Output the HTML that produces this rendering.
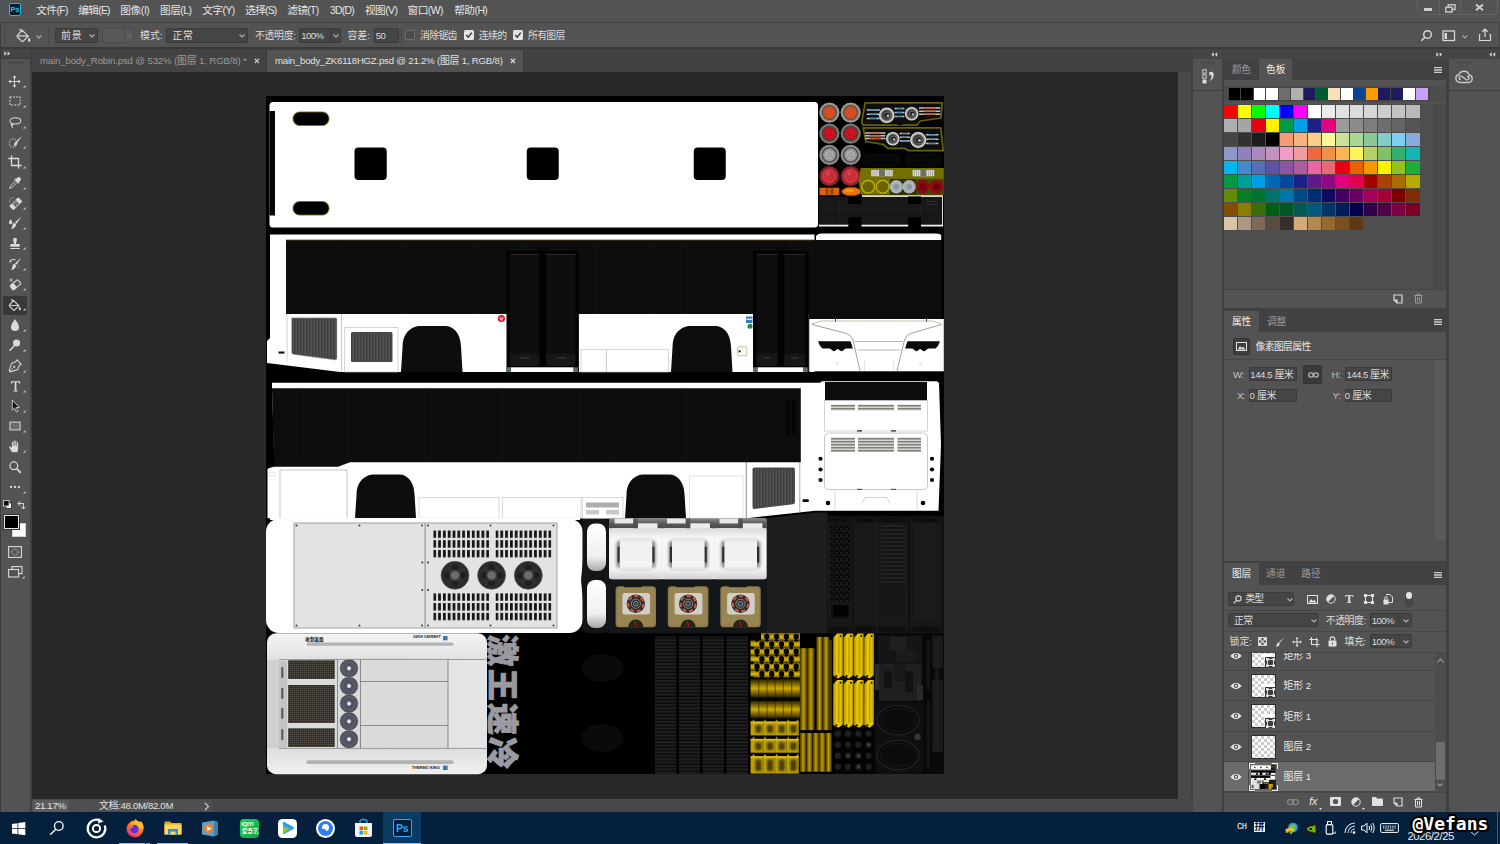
<!DOCTYPE html>
<html lang="zh-CN"><head><meta charset="utf-8"><title>Photoshop</title>
<style>
*{box-sizing:border-box;margin:0;padding:0}
html,body{width:1500px;height:844px;overflow:hidden;background:#535353}
body{position:relative;font-family:"Liberation Sans","Noto Sans CJK SC",sans-serif;font-size:9.9px;color:#dcdcdc;line-height:1}
.a{position:absolute}
.t{position:absolute;white-space:nowrap;line-height:12px;height:12px}
.dim{color:#9a9a9a}
.inp{position:absolute;background:#454545;border:1px solid #3a3a3a;border-radius:2px}
.ln{position:absolute;background:#383838}
.l{font-size:0.97em}
svg{position:absolute;overflow:visible}
</style></head>
<body>
<div class="a" style="left:0.0px;top:0.0px;width:1500.0px;height:22.0px;background:#535353;"></div>
<div class="a" style="left:9px;top:3px;width:12px;height:13px;background:#041c2c;border:1px solid #22b8f0;border-radius:2px"></div>
<div class="t" style="left:10.5px;top:4px;font-size:7.5px;line-height:11px;color:#2cc0f4;font-weight:bold;letter-spacing:-0.3px">Ps</div>
<div class="t " style="left:36.3px;top:3.8px;color:#e4e4e4;font-size:10.7px;letter-spacing:-0.625px;">文件<span class="l">(F)</span></div>
<div class="t " style="left:78.3px;top:3.8px;color:#e4e4e4;font-size:10.7px;letter-spacing:-0.741px;">编辑<span class="l">(E)</span></div>
<div class="t " style="left:120.3px;top:3.8px;color:#e4e4e4;font-size:10.7px;letter-spacing:-0.414px;">图像<span class="l">(I)</span></div>
<div class="t " style="left:160.0px;top:3.8px;color:#e4e4e4;font-size:10.7px;letter-spacing:-0.532px;">图层<span class="l">(L)</span></div>
<div class="t " style="left:202.2px;top:3.8px;color:#e4e4e4;font-size:10.7px;letter-spacing:-0.521px;">文字<span class="l">(Y)</span></div>
<div class="t " style="left:245.3px;top:3.8px;color:#e4e4e4;font-size:10.7px;letter-spacing:-0.821px;">选择<span class="l">(S)</span></div>
<div class="t " style="left:287.2px;top:3.8px;color:#e4e4e4;font-size:10.7px;letter-spacing:-0.645px;">滤镜<span class="l">(T)</span></div>
<div class="t " style="left:330.0px;top:3.8px;color:#e4e4e4;font-size:10.7px;letter-spacing:-0.745px;"><span class="l">3D(D)</span></div>
<div class="t " style="left:365.0px;top:3.8px;color:#e4e4e4;font-size:10.7px;letter-spacing:-0.581px;">视图<span class="l">(V)</span></div>
<div class="t " style="left:407.5px;top:3.8px;color:#e4e4e4;font-size:10.7px;letter-spacing:-0.556px;">窗口<span class="l">(W)</span></div>
<div class="t " style="left:454.2px;top:3.8px;color:#e4e4e4;font-size:10.7px;letter-spacing:-0.536px;">帮助<span class="l">(H)</span></div>
<div class="a" style="left:1417.200px;top:-3px;width:80.400px;height:17.800px;border:1px solid #636363;border-radius:0 0 3px 3px"></div>
<div class="a" style="left:1439.2px;top:0.0px;width:1.0px;height:14.8px;background:#636363;"></div>
<div class="a" style="left:1460.4px;top:0.0px;width:1.0px;height:14.8px;background:#636363;"></div>
<div class="a" style="left:1424.2px;top:8.4px;width:7.8px;height:2.4px;background:#cdcdcd;"></div>
<svg style="left:1444.500px;top:3.500px" width="11" height="9"><path d="M0.800 3.300h6.200v4.700h-6.200z M3.200 3.300v-2.500h6.800v4.700h-3" fill="none" stroke="#c4c4c4" stroke-width="1.500"/></svg>
<svg style="left:1474.500px;top:4px" width="9" height="7"><path d="M1 0.600l7 5.600M8 0.600l-7 5.600" fill="none" stroke="#d0d0d0" stroke-width="1.900"/></svg>
<div class="a" style="left:0.0px;top:21.6px;width:1500.0px;height:1.4px;background:#444444;"></div>
<div class="a" style="left:0.0px;top:23.5px;width:1500.0px;height:24.5px;background:#535353;"></div>
<div class="a" style="left:0.0px;top:47.0px;width:1500.0px;height:1.5px;background:#3a3a3a;"></div>
<div class="a" style="left:4px;top:28px;width:2px;height:15px;background:repeating-linear-gradient(180deg,#444 0 1px,transparent 1px 2px)"></div>
<svg style="left:16px;top:28px" width="16" height="16" viewBox="0 0 16 16"><path d="M6.2 2.2 L12.2 8.2 L7.2 13.2 Q6.4 14 5.6 13.2 L1.4 9 Q0.6 8.2 1.4 7.4 Z M2.2 7.8 L11.2 7.8" fill="none" stroke="#d8d8d8" stroke-width="1.2"/><path d="M3.5 1 L6.5 4" stroke="#d8d8d8" stroke-width="1.2"/><path d="M13.2 9.5 Q15.2 12.3 13.9 13.4 Q12.6 14.2 12 12.8 Q11.7 11.6 13.2 9.5Z" fill="#d8d8d8"/></svg>
<svg style="left:36.0px;top:34.8px" width="6" height="4"><path d="M0.5 0.5 L3.0 3.0 L5.5 0.5" fill="none" stroke="#b0b0b0" stroke-width="1.1"/></svg>
<div class="a" style="left:48.0px;top:28.0px;width:1.0px;height:16.0px;background:#474747;"></div>
<div class="inp" style="left:55.0px;top:28.0px;width:43.0px;height:15.0px;"></div>
<div class="t " style="left:61.0px;top:29.8px;letter-spacing:0.917px;">前景</div>
<svg style="left:89.0px;top:34.0px" width="6" height="4"><path d="M0.5 0.5 L3.0 3.0 L5.5 0.5" fill="none" stroke="#b0b0b0" stroke-width="1.1"/></svg>
<div class="a" style="left:102px;top:28px;width:32px;height:15px;border:1px solid #4b4b4b;border-radius:2px;background:#585858"></div>
<div class="a" style="left:124.0px;top:28.0px;width:1.0px;height:15.0px;background:#4b4b4b;"></div>
<svg style="left:126.5px;top:34.3px" width="5" height="4"><path d="M0.5 0.5 L2.5 2.5 L4.5 0.5" fill="none" stroke="#6a6a6a" stroke-width="1.1"/></svg>
<div class="t " style="left:140.0px;top:29.8px;letter-spacing:0.054px;">模式<span class="l">:</span></div>
<div class="inp" style="left:166.0px;top:28.0px;width:82.0px;height:15.0px;"></div>
<div class="t " style="left:172.5px;top:29.8px;letter-spacing:0.667px;">正常</div>
<svg style="left:239.0px;top:34.0px" width="6" height="4"><path d="M0.5 0.5 L3.0 3.0 L5.5 0.5" fill="none" stroke="#b0b0b0" stroke-width="1.1"/></svg>
<div class="t " style="left:255.0px;top:29.8px;letter-spacing:-0.317px;">不透明度<span class="l">:</span></div>
<div class="inp" style="left:299.0px;top:28.0px;width:42.0px;height:15.0px;"></div>
<div class="a" style="left:330.0px;top:29.0px;width:1.0px;height:13.0px;background:#3a3a3a;"></div>
<div class="t " style="left:301.3px;top:29.8px;letter-spacing:-0.562px;"><span class="l">100%</span></div>
<svg style="left:332.8px;top:34.0px" width="6" height="4"><path d="M0.5 0.5 L3.0 3.0 L5.5 0.5" fill="none" stroke="#b0b0b0" stroke-width="1.1"/></svg>
<div class="t " style="left:347.5px;top:29.8px;letter-spacing:-0.046px;">容差<span class="l">:</span></div>
<div class="inp" style="left:374.0px;top:28.0px;width:25.0px;height:15.0px;"></div>
<div class="t " style="left:375.8px;top:29.8px;letter-spacing:-0.586px;"><span class="l">50</span></div>
<div class="a" style="left:401.0px;top:28.0px;width:1.0px;height:16.0px;background:#464646;"></div>
<div class="a" style="left:405px;top:30px;width:10px;height:10px;border:1px solid #6e6e6e;border-radius:1px;background:#4a4a4a"></div>
<div class="t " style="left:420.0px;top:29.8px;letter-spacing:-0.679px;">消除锯齿</div>
<div class="a" style="left:464px;top:30px;width:10px;height:10px;border-radius:1.5px;background:#e4e4e4"></div>
<svg style="left:464px;top:30px" width="10" height="10"><path d="M2.2 5 L4.2 7.2 L7.8 2.6" fill="none" stroke="#3a3a3a" stroke-width="1.5"/></svg>
<div class="a" style="left:513px;top:30px;width:10px;height:10px;border-radius:1.5px;background:#e4e4e4"></div>
<svg style="left:513px;top:30px" width="10" height="10"><path d="M2.2 5 L4.2 7.2 L7.8 2.6" fill="none" stroke="#3a3a3a" stroke-width="1.5"/></svg>
<div class="t " style="left:478.8px;top:29.8px;letter-spacing:-0.614px;">连续的</div>
<div class="t " style="left:528.0px;top:29.8px;letter-spacing:-0.729px;">所有图层</div>
<svg style="left:1420px;top:29px" width="13" height="13"><circle cx="7.5" cy="5.5" r="3.8" fill="none" stroke="#d8d8d8" stroke-width="1.4"/><path d="M4.8 8.2 L1.3 11.7" stroke="#d8d8d8" stroke-width="1.6"/></svg>
<svg style="left:1442px;top:30px" width="14" height="12"><rect x="1" y="1" width="11.5" height="9.5" fill="none" stroke="#d8d8d8" stroke-width="1.3"/><rect x="2.5" y="3" width="2.5" height="6" fill="#d8d8d8"/></svg>
<svg style="left:1462.2px;top:34.9px" width="5" height="4"><path d="M0.5 0.5 L2.8 2.8 L5.1 0.5" fill="none" stroke="#b0b0b0" stroke-width="1.1"/></svg>
<svg style="left:1478px;top:28px" width="14" height="14"><path d="M2.5 6.5h-1v6h11v-6h-1" fill="none" stroke="#d8d8d8" stroke-width="1.2"/><path d="M7 9V1.5M4.3 3.8L7 1.2l2.7 2.6" fill="none" stroke="#d8d8d8" stroke-width="1.2"/></svg>
<div class="a" style="left:0.0px;top:48.5px;width:1193.0px;height:23.5px;background:#424242;"></div>
<div class="a" style="left:0.0px;top:48.5px;width:30.0px;height:9.1px;background:#454545;"></div>
<svg style="left:4px;top:51px" width="8" height="5"><path d="M0.3 0.3L2.8 2.5L0.3 4.7ZM3.6 0.3L6.1 2.5L3.6 4.7Z" fill="#d8d8d8"/></svg>
<div class="a" style="left:32.0px;top:49.5px;width:234.0px;height:22.5px;background:#434343;"></div>
<div class="a" style="left:266.0px;top:50.0px;width:1.0px;height:22.0px;background:#3a3a3a;"></div>
<div class="t dim" style="left:40.0px;top:54.5px;letter-spacing:-0.140px;"><span class="l">main_body_Robin.psd @ 532% (</span>图层 <span class="l">1, RGB/8) *</span></div>
<svg style="left:253.500px;top:57.800px" width="6" height="6"><path d="M0.800 0.800l4.200 4.200M5 0.800l-4.200 4.200" stroke="#c4c4c4" stroke-width="1.300"/></svg>
<div class="a" style="left:267.0px;top:49.5px;width:256.0px;height:22.5px;background:#535353;"></div>
<div class="a" style="left:523.0px;top:50.0px;width:1.0px;height:22.0px;background:#3c3c3c;"></div>
<div class="t " style="left:275.0px;top:54.5px;color:#e2e2e2;letter-spacing:-0.205px;"><span class="l">main_body_ZK6118HGZ.psd @ 21.2% (</span>图层 <span class="l">1, RGB/8)</span></div>
<svg style="left:509.800px;top:57.800px" width="6" height="6"><path d="M0.800 0.800l4.200 4.200M5 0.800l-4.200 4.200" stroke="#d4d4d4" stroke-width="1.300"/></svg>
<div class="a" style="left:32.0px;top:72.0px;width:1146.0px;height:727.0px;background:#282828;"></div>
<div class="a" style="left:1178.0px;top:72.0px;width:13.0px;height:727.0px;background:#4a4a4a;"></div>
<div class="a" style="left:1191.0px;top:48.5px;width:2.0px;height:763.5px;background:#404040;"></div>
<div class="a" style="left:0.0px;top:799.0px;width:1193.0px;height:13.0px;background:#474747;"></div>
<div class="a" style="left:32.0px;top:799.5px;width:180.0px;height:12.5px;background:#4f4f4f;"></div>
<div class="a" style="left:32.5px;top:800.0px;width:36.5px;height:11.7px;background:#5c5c5c;"></div>
<div class="t " style="left:35.0px;top:800.0px;color:#e8e8e8;letter-spacing:-0.324px;"><span class="l">21.17%</span></div>
<div class="t " style="left:99.0px;top:800.0px;color:#e0e0e0;letter-spacing:-0.310px;">文档<span class="l">:48.0M/82.0M</span></div>
<svg style="left:204px;top:802px" width="6" height="9"><path d="M1 1L4.500 4.500L1 8" fill="none" stroke="#d0d0d0" stroke-width="1.100"/></svg>
<div class="a" style="left:0.0px;top:58.5px;width:30.0px;height:753.5px;background:#535353;"></div>
<div class="a" style="left:0.0px;top:22.0px;width:1.0px;height:790.0px;background:#3c3c3c;"></div>
<div class="a" style="left:30.0px;top:48.5px;width:2.0px;height:763.5px;background:#404040;"></div>
<div class="a" style="left:0.0px;top:57.6px;width:30.0px;height:1.0px;background:#3a3a3a;"></div>
<div class="a" style="left:8px;top:61px;width:15px;height:3px;background:repeating-linear-gradient(90deg,#454545 0 1px,transparent 1px 2px)"></div>
<div class="a" style="left:3px;top:296px;width:24px;height:19px;background:#383838;border-radius:2px"></div>
<svg style="left:7.8px;top:74.8px" width="13" height="13" viewBox="0 0 18 18"><path d="M9 1.5V16.5M1.5 9H16.5" stroke="#dadada" stroke-width="1.3"/><path d="M9 0.5l2.6 3.2H6.4zM9 17.5l2.6-3.2H6.4zM0.5 9l3.2-2.6v5.2zM17.5 9l-3.2-2.6v5.2z" fill="#dadada"/></svg>
<svg style="left:22.6px;top:85.2px" width="2.6" height="2.6"><path d="M2.6 0V2.6H0Z" fill="#c8c8c8"/></svg>
<svg style="left:7.8px;top:94.0px" width="14" height="14" viewBox="0 0 18 18"><rect x="2.5" y="4" width="13" height="10" fill="none" stroke="#dadada" stroke-width="1.3" stroke-dasharray="2.4 1.6"/></svg>
<svg style="left:22.6px;top:104.8px" width="2.6" height="2.6"><path d="M2.6 0V2.6H0Z" fill="#c8c8c8"/></svg>
<svg style="left:7.8px;top:115.0px" width="14" height="14" viewBox="0 0 18 18"><path d="M9.5 3.5C14 3.5 16.5 5.5 16.5 7.5C16.5 10 13 11.5 9 11.5C5 11.5 2.5 10 2.5 7.8C2.5 5.5 5.5 3.5 9.5 3.5Z M5.5 11.2C4 11.5 3.8 13 5 13.3C6.3 13.5 6.3 12 5.4 11.5 M4.8 13.3C4.5 15 5.5 16 6.5 16.5" fill="none" stroke="#dadada" stroke-width="1.3"/></svg>
<svg style="left:22.6px;top:125.8px" width="2.6" height="2.6"><path d="M2.6 0V2.6H0Z" fill="#c8c8c8"/></svg>
<svg style="left:7.8px;top:134.9px" width="14" height="14" viewBox="0 0 18 18"><ellipse cx="6.500" cy="10.500" rx="4.800" ry="5.600" fill="none" stroke="#dadada" stroke-width="1.200" stroke-dasharray="1.800 1.400"/><path d="M17.500 1.500L12.600 9.200L10.800 7.700Z M10.300 8.200L12.100 9.700C12.100 12.200 10 14 7 14.400C8.200 13 8 11.500 8.600 10.100C9 9.100 9.600 8.400 10.300 8.200Z" fill="#dadada"/></svg>
<svg style="left:22.6px;top:145.8px" width="2.6" height="2.6"><path d="M2.6 0V2.6H0Z" fill="#c8c8c8"/></svg>
<svg style="left:7.8px;top:154.8px" width="14" height="14" viewBox="0 0 18 18"><path d="M4.5 0.5V13.5H17.5M0.5 4.5H13.5V17.5" fill="none" stroke="#dadada" stroke-width="1.7"/></svg>
<svg style="left:22.6px;top:165.6px" width="2.6" height="2.6"><path d="M2.6 0V2.6H0Z" fill="#c8c8c8"/></svg>
<svg style="left:7.8px;top:175.8px" width="14" height="14" viewBox="0 0 18 18"><path d="M15.8 2.2C14.6 1 13 1.2 12 2.2L10.2 4L9.4 3.2L8 4.6L13.4 10L14.8 8.6L14 7.8L15.8 6C16.8 5 17 3.4 15.8 2.2Z" fill="#dadada"/><path d="M9.5 6.5L3 13L2.2 15.8L5 15L11.5 8.5" fill="none" stroke="#dadada" stroke-width="1.2"/></svg>
<svg style="left:22.6px;top:186.6px" width="2.6" height="2.6"><path d="M2.6 0V2.6H0Z" fill="#c8c8c8"/></svg>
<svg style="left:7.8px;top:195.9px" width="14" height="14" viewBox="0 0 18 18"><path d="M2.2 8.5A5.6 5.6 0 0 1 8.6 2" fill="none" stroke="#dadada" stroke-width="1" stroke-dasharray="1.4 1.2"/><g transform="rotate(-45 10 10)"><rect x="1.8" y="6" width="16.4" height="8" rx="1.6" fill="#dadada"/><rect x="6.6" y="6.6" width="6.8" height="6.8" fill="#535353"/><rect x="7.2" y="7.2" width="5.6" height="5.6" fill="none" stroke="#dadada" stroke-width="0.7"/><circle cx="8.8" cy="8.8" r="0.7" fill="#dadada"/><circle cx="11.2" cy="8.8" r="0.7" fill="#dadada"/><circle cx="10" cy="11.2" r="0.7" fill="#dadada"/></g></svg>
<svg style="left:22.6px;top:206.8px" width="2.6" height="2.6"><path d="M2.6 0V2.6H0Z" fill="#c8c8c8"/></svg>
<svg style="left:7.8px;top:216.2px" width="14" height="14" viewBox="0 0 18 18"><path d="M17.2 0.8L11 10L8.8 8.2Z M8.2 8.8L10.4 10.6C10.6 13.6 8 16.2 4 16.8C5.6 14.8 5.2 12.8 6 11C6.5 9.8 7.3 9 8.2 8.8Z" fill="#dadada"/><path d="M3.4 4.200C3.4 4.200 1.200 7 1.200 8.400A2.200 2.200 0 0 0 5.600 8.400C5.600 7 3.400 4.200 3.400 4.200Z" fill="#dadada"/></svg>
<svg style="left:22.6px;top:227.0px" width="2.6" height="2.6"><path d="M2.6 0V2.6H0Z" fill="#c8c8c8"/></svg>
<svg style="left:7.8px;top:236.6px" width="14" height="14" viewBox="0 0 18 18"><path d="M6.5 3.5A2.5 2.5 0 1 1 11.5 3.5C11.5 5.5 10.3 6 10.3 9H15V12.5H3V9H7.7C7.7 6 6.5 5.5 6.5 3.5Z M3 14H15V15.5H3Z" fill="#dadada"/></svg>
<svg style="left:22.6px;top:247.4px" width="2.6" height="2.6"><path d="M2.6 0V2.6H0Z" fill="#c8c8c8"/></svg>
<svg style="left:7.8px;top:256.9px" width="14" height="14" viewBox="0 0 18 18"><path d="M17.2 0.8L11 10L8.8 8.2Z M8.2 8.8L10.4 10.6C10.6 13.6 8 16.2 4 16.8C5.6 14.8 5.2 12.8 6 11C6.5 9.8 7.3 9 8.2 8.800Z" fill="#dadada"/><path d="M2.500 5.500C4 3 7.500 2.500 9.500 4" fill="none" stroke="#dadada" stroke-width="1.300"/><path d="M1 6.800L3.800 4.200L4.200 7.200Z" fill="#dadada"/><circle cx="12.5" cy="13" r="0.6" fill="#dadada"/><circle cx="14" cy="11.200" r="0.600" fill="#dadada"/></svg>
<svg style="left:22.6px;top:267.8px" width="2.6" height="2.6"><path d="M2.6 0V2.6H0Z" fill="#c8c8c8"/></svg>
<svg style="left:7.8px;top:277.1px" width="14" height="14" viewBox="0 0 18 18"><g transform="rotate(-40 9 10)"><rect x="3" y="7" width="13" height="7" rx="1" fill="none" stroke="#dadada" stroke-width="1.3"/><rect x="3" y="7" width="6" height="7" fill="#dadada"/></g><path d="M2 2l4 4M6 2l-4 4" stroke="#dadada" stroke-width="1.1"/></svg>
<svg style="left:22.6px;top:288.0px" width="2.6" height="2.6"><path d="M2.6 0V2.6H0Z" fill="#c8c8c8"/></svg>
<svg style="left:7.8px;top:297.6px" width="14" height="14" viewBox="0 0 18 18"><path d="M7 3L14 10L8.6 15.4Q7.7 16.3 6.8 15.4L2.1 10.7Q1.2 9.8 2.1 8.9Z" fill="none" stroke="#dadada" stroke-width="1.4"/><path d="M3 9.6H12.8" stroke="#dadada" stroke-width="1.2"/><path d="M4 1.5L7.5 5" stroke="#dadada" stroke-width="1.3"/><path d="M15.2 11Q17.5 14.2 16 15.4Q14.5 16.2 13.9 14.7Q13.5 13.3 15.2 11Z" fill="#dadada"/></svg>
<svg style="left:22.6px;top:308.4px" width="2.6" height="2.6"><path d="M2.6 0V2.6H0Z" fill="#c8c8c8"/></svg>
<svg style="left:7.8px;top:317.8px" width="14" height="14" viewBox="0 0 18 18"><path d="M9 1.5C9 1.5 3.8 8 3.8 11.5A5.2 5.2 0 0 0 14.2 11.5C14.2 8 9 1.5 9 1.5Z" fill="#dadada"/></svg>
<svg style="left:22.6px;top:328.6px" width="2.6" height="2.6"><path d="M2.6 0V2.6H0Z" fill="#c8c8c8"/></svg>
<svg style="left:7.8px;top:338.1px" width="14" height="14" viewBox="0 0 18 18"><circle cx="11" cy="6.5" r="4.5" fill="#dadada"/><path d="M8 10L2 16.5" stroke="#dadada" stroke-width="1.8"/></svg>
<svg style="left:22.6px;top:348.9px" width="2.6" height="2.6"><path d="M2.6 0V2.6H0Z" fill="#c8c8c8"/></svg>
<svg style="left:7.8px;top:358.8px" width="14" height="14" viewBox="0 0 18 18"><path d="M11.5 1L17 6.5L14.5 8L12.5 13.5L3 16.5L1.5 15L4.5 5.5L10 3.5Z" fill="none" stroke="#dadada" stroke-width="1.3"/><circle cx="8" cy="10" r="1.4" fill="#dadada"/><path d="M2 16L7.2 10.8" stroke="#dadada" stroke-width="1"/></svg>
<svg style="left:22.6px;top:369.6px" width="2.6" height="2.6"><path d="M2.6 0V2.6H0Z" fill="#c8c8c8"/></svg>
<svg style="left:7.8px;top:378.9px" width="14" height="14" viewBox="0 0 18 18"><path d="M3.800 2.800H15.600V6.200H14.500C14.200 4.800 13.800 4.300 12.400 4.300H10.800V13.800C10.800 14.800 11.200 15 12.500 15.100V16.100H6.900V15.100C8.200 15 8.600 14.800 8.600 13.800V4.300H7C5.600 4.300 5.200 4.800 4.900 6.200H3.800Z" fill="#dadada"/></svg>
<svg style="left:22.6px;top:389.8px" width="2.6" height="2.6"><path d="M2.6 0V2.6H0Z" fill="#c8c8c8"/></svg>
<svg style="left:7.8px;top:399.1px" width="14" height="14" viewBox="0 0 18 18"><path d="M5.500 1.500V14.500L8.500 11.600L10.800 16.600L12.800 15.700L10.500 10.800H14.800Z" fill="#141414" stroke="#dadada" stroke-width="1.100" stroke-linejoin="round"/></svg>
<svg style="left:22.6px;top:410.0px" width="2.6" height="2.6"><path d="M2.6 0V2.6H0Z" fill="#c8c8c8"/></svg>
<svg style="left:7.8px;top:418.8px" width="14" height="14" viewBox="0 0 18 18"><rect x="2.5" y="4" width="13" height="10" fill="#6a6a6a" stroke="#dadada" stroke-width="1.3"/></svg>
<svg style="left:22.6px;top:429.6px" width="2.6" height="2.6"><path d="M2.6 0V2.6H0Z" fill="#c8c8c8"/></svg>
<svg style="left:7.8px;top:439.1px" width="14" height="14" viewBox="0 0 18 18"><path d="M5.200 17C3.800 14.600 1.600 11.800 1.600 10.400C1.600 9.300 3 9 3.700 10.100L5 12V4.500C5 3.300 6.700 3.300 6.700 4.500V8.500H7.100V2.800C7.100 1.600 8.800 1.600 8.800 2.800V8.500H9.200V3.200C9.200 2 10.900 2 10.900 3.200V8.800H11.300V5C11.300 3.800 13 3.800 13 5V12C13 14 12.600 15.600 12 17Z" fill="#dadada"/><path d="M6.900 4V9M9 3V9M11.100 4V9.300" stroke="#535353" stroke-width="0.500"/></svg>
<svg style="left:22.6px;top:449.9px" width="2.6" height="2.6"><path d="M2.6 0V2.6H0Z" fill="#c8c8c8"/></svg>
<svg style="left:7.8px;top:459.6px" width="14" height="14" viewBox="0 0 18 18"><circle cx="7.5" cy="7.5" r="5" fill="none" stroke="#dadada" stroke-width="1.6"/><path d="M11.2 11.2L16.5 16.5" stroke="#dadada" stroke-width="2.2"/></svg>
<svg style="left:7.8px;top:480.1px" width="14" height="14" viewBox="0 0 18 18"><circle cx="4" cy="9" r="1.5" fill="#dadada"/><circle cx="9" cy="9" r="1.5" fill="#dadada"/><circle cx="14" cy="9" r="1.5" fill="#dadada"/></svg>
<svg style="left:22.6px;top:490.9px" width="2.6" height="2.6"><path d="M2.6 0V2.6H0Z" fill="#c8c8c8"/></svg>
<svg style="left:3px;top:500px" width="9" height="9"><rect x="3" y="3" width="5.5" height="5.5" fill="#fff" stroke="#222" stroke-width="0.8"/><rect x="0.5" y="0.5" width="5.5" height="5.500" fill="#111" stroke="#ddd" stroke-width="0.8"/></svg>
<svg style="left:16px;top:500px" width="10" height="10"><path d="M2 3.500H7.500V9M2 3.500L4.200 1.300M2 3.500L4.200 5.700M7.500 9L5.300 6.800M7.500 9L9.700 6.800" fill="none" stroke="#dadada" stroke-width="1"/></svg>
<div class="a" style="left:11.5px;top:523px;width:14.5px;height:14px;background:#fff;border:1px solid #d0d0d0"></div>
<div class="a" style="left:4px;top:515px;width:14.5px;height:14px;background:#000;border:1px solid #e8e8e8;box-shadow:0 0 0 1px #333"></div>
<svg style="left:8px;top:545.5px" width="14" height="12"><rect x="0.6" y="0.6" width="12.800" height="10.800" fill="none" stroke="#dadada" stroke-width="1.1"/><circle cx="7" cy="6" r="3" fill="none" stroke="#dadada" stroke-width="1" stroke-dasharray="1.2 1"/></svg>
<svg style="left:8px;top:566px" width="15" height="12"><rect x="4" y="0.600" width="10" height="7" fill="#535353" stroke="#dadada" stroke-width="1.1"/><rect x="0.600" y="3.500" width="10" height="7.500" fill="#535353" stroke="#dadada" stroke-width="1.1"/></svg>
<svg style="left:22.2px;top:575.6px" width="2.6" height="2.6"><path d="M2.6 0V2.6H0Z" fill="#c8c8c8"/></svg>
<svg class="a" style="left:266px;top:96px" width="678" height="678" viewBox="266 96 678 678">
<defs>
<pattern id="vstripe" width="1.5" height="4" patternUnits="userSpaceOnUse"><rect width="1.5" height="4" fill="#5e5e5e"/><rect width="0.9" height="4" fill="#3a3a3a"/></pattern>
<pattern id="slots" x="433.3" y="530.3" width="4.82" height="9.8" patternUnits="userSpaceOnUse"><rect width="4.82" height="9.8" fill="#e4e4e4"/><rect x="0" y="0" width="2.8" height="7.7" rx="0.5" fill="#151515"/></pattern>
<pattern id="slots2" x="495.5" y="530.3" width="4.82" height="9.8" patternUnits="userSpaceOnUse"><rect width="4.82" height="9.8" fill="#e4e4e4"/><rect x="0" y="0" width="2.8" height="7.7" rx="0.5" fill="#151515"/></pattern>
<pattern id="slots3" x="433.3" y="593.2" width="4.82" height="9.8" patternUnits="userSpaceOnUse"><rect width="4.82" height="9.8" fill="#e4e4e4"/><rect x="0" y="0" width="2.8" height="7.7" rx="0.5" fill="#151515"/></pattern>
<pattern id="slots4" x="495.5" y="593.2" width="4.82" height="9.8" patternUnits="userSpaceOnUse"><rect width="4.82" height="9.8" fill="#e4e4e4"/><rect x="0" y="0" width="2.8" height="7.7" rx="0.5" fill="#151515"/></pattern>
<pattern id="hvent" width="4" height="1.5" patternUnits="userSpaceOnUse"><rect width="4" height="1.5" fill="#f4f4f4"/><rect width="4" height="0.8" fill="#6a6a62"/></pattern>
<pattern id="ribs" width="4" height="3.4" patternUnits="userSpaceOnUse"><rect width="4" height="3.4" fill="#202020"/><rect y="2.1" width="4" height="1.3" fill="#080808"/></pattern>
<pattern id="mesh" width="2" height="2" patternUnits="userSpaceOnUse"><rect width="2" height="2" fill="#3a3632"/><rect width="1" height="1" fill="#55504a"/><rect x="1" y="1" width="1" height="1" fill="#2a2724"/></pattern>
<linearGradient id="acg" x1="0" y1="0" x2="0" y2="1"><stop offset="0" stop-color="#f4f4f4"/><stop offset="0.25" stop-color="#dcdcdc"/><stop offset="0.75" stop-color="#d8d8d8"/><stop offset="1" stop-color="#f0f0f0"/></linearGradient>
<linearGradient id="capg" x1="0" y1="0" x2="0" y2="1"><stop offset="0" stop-color="#ffffff"/><stop offset="0.7" stop-color="#f0f0f0"/><stop offset="1" stop-color="#a8a8a8"/></linearGradient>
<linearGradient id="boxg" x1="0" y1="0" x2="0" y2="1"><stop offset="0" stop-color="#d8d8d8"/><stop offset="0.2" stop-color="#f8f8f8"/><stop offset="0.8" stop-color="#f4f4f4"/><stop offset="1" stop-color="#cfcfcf"/></linearGradient>
<linearGradient id="pipe" x1="0" y1="0" x2="1" y2="0"><stop offset="0" stop-color="#3a2e00"/><stop offset="0.5" stop-color="#c4a000"/><stop offset="1" stop-color="#3a2e00"/></linearGradient>
<pattern id="pipes" x="800" y="0" width="7.7" height="10" patternUnits="userSpaceOnUse"><rect width="7.7" height="10" fill="url(#pipe)"/></pattern>
<pattern id="ypipes" x="832.5" y="0" width="10.6" height="10" patternUnits="userSpaceOnUse"><rect width="10.6" height="10" fill="url(#pipe2)"/></pattern>
<linearGradient id="pipe2" x1="0" y1="0" x2="1" y2="0"><stop offset="0" stop-color="#a88c00"/><stop offset="0.35" stop-color="#ecca00"/><stop offset="0.8" stop-color="#e0be00"/><stop offset="1" stop-color="#8a7000"/></linearGradient>
<linearGradient id="yv2" x1="0" y1="0" x2="0" y2="1"><stop offset="0" stop-color="#6a5600"/><stop offset="0.45" stop-color="#d4b200"/><stop offset="0.6" stop-color="#d4b200"/><stop offset="1" stop-color="#5a4800"/></linearGradient>
<linearGradient id="yv" x1="0" y1="0" x2="0" y2="1"><stop offset="0" stop-color="#2a2200"/><stop offset="0.5" stop-color="#d0aa00"/><stop offset="1" stop-color="#2a2200"/></linearGradient>
<radialGradient id="lens"><stop offset="0" stop-color="#202020"/><stop offset="0.55" stop-color="#3a3a3a"/><stop offset="0.72" stop-color="#9a9a9a"/><stop offset="0.88" stop-color="#e0e0e0"/><stop offset="1" stop-color="#707070"/></radialGradient>
<linearGradient id="dkg" x1="0" y1="0" x2="0" y2="1"><stop offset="0" stop-color="#8a8a8a"/><stop offset="0.5" stop-color="#5a5a5a"/><stop offset="1" stop-color="#4a4a4a"/></linearGradient>
<linearGradient id="sqg" x1="0" y1="0" x2="0" y2="1"><stop offset="0" stop-color="#e2e2e2"/><stop offset="0.15" stop-color="#efefef"/><stop offset="0.85" stop-color="#f3f3f3"/><stop offset="1" stop-color="#dcdcdc"/></linearGradient>
<filter id="blur2" x="-20%" y="-20%" width="140%" height="140%"><feGaussianBlur stdDeviation="1.6"/></filter>
<filter id="blur1" x="-20%" y="-20%" width="140%" height="140%"><feGaussianBlur stdDeviation="0.8"/></filter>
<radialGradient id="fan"><stop offset="0" stop-color="#8a8a8a"/><stop offset="0.28" stop-color="#707070"/><stop offset="0.3" stop-color="#3a3a3a"/><stop offset="0.85" stop-color="#333"/><stop offset="1" stop-color="#1e1e1e"/></radialGradient>
<radialGradient id="fan2"><stop offset="0" stop-color="#b8bcc8"/><stop offset="0.25" stop-color="#8a90a0"/><stop offset="0.3" stop-color="#4a4e5c"/><stop offset="0.8" stop-color="#5a5e6c"/><stop offset="1" stop-color="#2e3038"/></radialGradient>
</defs>
<defs>
<pattern id="grit" width="5" height="6" patternUnits="userSpaceOnUse"><rect x="0.5" y="0.5" width="2" height="2.4" fill="none" stroke="#4a4a50" stroke-width="0.4"/><rect x="3" y="3.2" width="1.6" height="2" fill="none" stroke="#3c3c44" stroke-width="0.4"/></pattern>
<pattern id="grit2" width="3" height="4" patternUnits="userSpaceOnUse"><rect x="0.4" y="0.4" width="1.2" height="2.6" fill="#3c3c40"/><rect x="2" y="1.5" width="0.5" height="2" fill="#55555a"/></pattern>
</defs>
<rect x="266" y="96" width="678" height="678" fill="#000"/>
<rect x="269.50" y="102.00" width="548.50" height="125.50" fill="#ffffff" rx="3.5"/>
<rect x="269.50" y="111.00" width="5.50" height="104.50" fill="#050505" />
<rect x="293.00" y="112.00" width="36.00" height="13.50" fill="#000" rx="6.5" stroke="#7a6c10" stroke-width="0.9"/>
<rect x="293.00" y="201.50" width="36.00" height="13.50" fill="#000" rx="6.5" stroke="#7a6c10" stroke-width="0.9"/>
<rect x="354.50" y="147.50" width="32.25" height="32.50" fill="#000" rx="4"/>
<rect x="526.75" y="147.50" width="32.00" height="32.50" fill="#000" rx="4"/>
<rect x="693.75" y="147.50" width="32.00" height="32.50" fill="#000" rx="4"/>
<circle cx="829.40" cy="112.60" r="10.10" fill="#8c8c84" />
<circle cx="829.40" cy="112.60" r="9.20" fill="none" stroke="#d0d0c8" stroke-opacity="0.35" stroke-width="0.9"/>
<circle cx="829.40" cy="112.60" r="7.60" fill="#2a2a28" fill-opacity="0.55"/>
<circle cx="829.40" cy="112.60" r="6.30" fill="#cf4a20" />
<circle cx="829.40" cy="112.60" r="3.40" fill="none" stroke="#e8643a" stroke-opacity="0.55" stroke-width="1.6" stroke-dasharray="1.8 1.2"/>
<circle cx="829.40" cy="112.60" r="0.90" fill="#e8643a" fill-opacity="0.7"/>
<circle cx="850.70" cy="112.60" r="10.10" fill="#8c8c84" />
<circle cx="850.70" cy="112.60" r="9.20" fill="none" stroke="#d0d0c8" stroke-opacity="0.35" stroke-width="0.9"/>
<circle cx="850.70" cy="112.60" r="7.60" fill="#2a2a28" fill-opacity="0.55"/>
<circle cx="850.70" cy="112.60" r="6.30" fill="#cf4a20" />
<circle cx="850.70" cy="112.60" r="3.40" fill="none" stroke="#e8643a" stroke-opacity="0.55" stroke-width="1.6" stroke-dasharray="1.8 1.2"/>
<circle cx="850.70" cy="112.60" r="0.90" fill="#e8643a" fill-opacity="0.7"/>
<circle cx="829.40" cy="133.60" r="10.10" fill="#66665f" />
<circle cx="829.40" cy="133.60" r="9.20" fill="none" stroke="#d0d0c8" stroke-opacity="0.35" stroke-width="0.9"/>
<circle cx="829.40" cy="133.60" r="7.60" fill="#2a2a28" fill-opacity="0.55"/>
<circle cx="829.40" cy="133.60" r="6.30" fill="#c20f1e" />
<circle cx="829.40" cy="133.60" r="3.40" fill="none" stroke="#e03040" stroke-opacity="0.55" stroke-width="1.6" stroke-dasharray="1.8 1.2"/>
<circle cx="829.40" cy="133.60" r="0.90" fill="#e03040" fill-opacity="0.7"/>
<circle cx="850.70" cy="133.60" r="10.10" fill="#66665f" />
<circle cx="850.70" cy="133.60" r="9.20" fill="none" stroke="#d0d0c8" stroke-opacity="0.35" stroke-width="0.9"/>
<circle cx="850.70" cy="133.60" r="7.60" fill="#2a2a28" fill-opacity="0.55"/>
<circle cx="850.70" cy="133.60" r="6.30" fill="#c20f1e" />
<circle cx="850.70" cy="133.60" r="3.40" fill="none" stroke="#e03040" stroke-opacity="0.55" stroke-width="1.6" stroke-dasharray="1.8 1.2"/>
<circle cx="850.70" cy="133.60" r="0.90" fill="#e03040" fill-opacity="0.7"/>
<circle cx="829.40" cy="154.90" r="10.10" fill="#7c7c7a" />
<circle cx="829.40" cy="154.90" r="9.20" fill="none" stroke="#d0d0c8" stroke-opacity="0.35" stroke-width="0.9"/>
<circle cx="829.40" cy="154.90" r="7.60" fill="#2a2a28" fill-opacity="0.55"/>
<circle cx="829.40" cy="154.90" r="6.30" fill="#9a9a9a" />
<circle cx="829.40" cy="154.90" r="3.40" fill="none" stroke="#c8c8c8" stroke-opacity="0.55" stroke-width="1.6" stroke-dasharray="1.8 1.2"/>
<circle cx="829.40" cy="154.90" r="0.90" fill="#c8c8c8" fill-opacity="0.7"/>
<circle cx="850.70" cy="154.90" r="10.10" fill="#7c7c7a" />
<circle cx="850.70" cy="154.90" r="9.20" fill="none" stroke="#d0d0c8" stroke-opacity="0.35" stroke-width="0.9"/>
<circle cx="850.70" cy="154.90" r="7.60" fill="#2a2a28" fill-opacity="0.55"/>
<circle cx="850.70" cy="154.90" r="6.30" fill="#9a9a9a" />
<circle cx="850.70" cy="154.90" r="3.40" fill="none" stroke="#c8c8c8" stroke-opacity="0.55" stroke-width="1.6" stroke-dasharray="1.8 1.2"/>
<circle cx="850.70" cy="154.90" r="0.90" fill="#c8c8c8" fill-opacity="0.7"/>
<circle cx="829.40" cy="176.10" r="10.10" fill="#7e2029" />
<circle cx="829.40" cy="176.10" r="8.60" fill="#a5242e" />
<circle cx="829.40" cy="176.10" r="6.40" fill="#c82c36" stroke="#e8a0a0" stroke-opacity="0.5" stroke-width="0.6"/>
<circle cx="827.90" cy="173.60" r="2.20" fill="#f06068" fill-opacity="0.45"/>
<circle cx="850.70" cy="176.10" r="10.10" fill="#7e2029" />
<circle cx="850.70" cy="176.10" r="8.60" fill="#a5242e" />
<circle cx="850.70" cy="176.10" r="6.40" fill="#c82c36" stroke="#e8a0a0" stroke-opacity="0.5" stroke-width="0.6"/>
<circle cx="849.20" cy="173.60" r="2.20" fill="#f06068" fill-opacity="0.45"/>
<rect x="819.50" y="187.80" width="19.80" height="7.40" fill="#d8640a" rx="0.8"/>
<rect x="825.50" y="188.40" width="8.00" height="6.20" fill="#9a4206" />
<rect x="828.00" y="188.40" width="3.00" height="6.20" fill="#c05808" />
<ellipse cx="851.2" cy="191.5" rx="9.5" ry="4.3" fill="#e87808" stroke="#9a3c00" stroke-width="0.8"/>
<ellipse cx="849.5" cy="190.5" rx="4.5" ry="1.8" fill="#f8a030" fill-opacity="0.7"/>
<path d="M865.1 102.8L942.4 102.8L940.9 118L920.4 121L916.7 125.2L862.8 125.2L861.7 121.8Z" fill="#0e0e0e" stroke="#66620a" stroke-width="1.7" stroke-linejoin="round"/>
<path d="M863.2 127.8L940.9 127.8L943.2 150.6L908.3 150.6L904.5 148.3L887.8 148.3L883.3 144.5L865.9 141.5Z" fill="#0e0e0e" stroke="#66620a" stroke-width="1.7" stroke-linejoin="round"/>
<path d="M897 125.2L900 122.5L903 125.2Z" fill="#0a0a0a" />
<rect x="866.60" y="109.25" width="13.40" height="1.50" fill="#c4c4c4" rx="0.7"/>
<rect x="869.55" y="109.45" width="7.50" height="1.10" fill="#3a86b8" />
<rect x="866.60" y="113.45" width="13.40" height="1.50" fill="#c4c4c4" rx="0.7"/>
<rect x="869.55" y="113.65" width="7.50" height="1.10" fill="#3a86b8" />
<rect x="866.60" y="117.65" width="13.40" height="1.50" fill="#c4c4c4" rx="0.7"/>
<rect x="869.55" y="117.85" width="7.50" height="1.10" fill="#3a86b8" />
<rect x="894.50" y="107.85" width="10.00" height="1.50" fill="#c4c4c4" rx="0.7"/>
<rect x="896.70" y="108.05" width="5.60" height="1.10" fill="#3a86b8" />
<rect x="894.50" y="111.85" width="10.00" height="1.50" fill="#c4c4c4" rx="0.7"/>
<rect x="896.70" y="112.05" width="5.60" height="1.10" fill="#3a86b8" />
<rect x="894.50" y="115.65" width="10.00" height="1.50" fill="#c4c4c4" rx="0.7"/>
<rect x="896.70" y="115.85" width="5.60" height="1.10" fill="#3a86b8" />
<rect x="918.90" y="107.35" width="21.60" height="1.50" fill="#c4c4c4" rx="0.7"/>
<rect x="923.65" y="107.55" width="12.10" height="1.10" fill="#cc5212" />
<rect x="918.90" y="110.45" width="21.60" height="1.50" fill="#c4c4c4" rx="0.7"/>
<rect x="923.65" y="110.65" width="12.10" height="1.10" fill="#cc5212" />
<rect x="918.90" y="113.45" width="21.60" height="1.50" fill="#c4c4c4" rx="0.7"/>
<rect x="923.65" y="113.65" width="12.10" height="1.10" fill="#cc5212" />
<rect x="865.00" y="132.35" width="20.60" height="1.50" fill="#c4c4c4" rx="0.7"/>
<rect x="869.53" y="132.55" width="11.54" height="1.10" fill="#cc5212" />
<rect x="865.00" y="135.05" width="20.60" height="1.50" fill="#c4c4c4" rx="0.7"/>
<rect x="869.53" y="135.25" width="11.54" height="1.10" fill="#cc5212" />
<rect x="865.00" y="137.75" width="20.60" height="1.50" fill="#c4c4c4" rx="0.7"/>
<rect x="869.53" y="137.95" width="11.54" height="1.10" fill="#cc5212" />
<rect x="899.50" y="132.85" width="10.50" height="1.50" fill="#c4c4c4" rx="0.7"/>
<rect x="901.81" y="133.05" width="5.88" height="1.10" fill="#3a86b8" />
<rect x="899.50" y="136.55" width="10.50" height="1.50" fill="#c4c4c4" rx="0.7"/>
<rect x="901.81" y="136.75" width="5.88" height="1.10" fill="#3a86b8" />
<rect x="899.50" y="140.15" width="10.50" height="1.50" fill="#c4c4c4" rx="0.7"/>
<rect x="901.81" y="140.35" width="5.88" height="1.10" fill="#3a86b8" />
<rect x="925.70" y="133.95" width="12.90" height="1.50" fill="#c4c4c4" rx="0.7"/>
<rect x="928.54" y="134.15" width="7.22" height="1.10" fill="#3a86b8" />
<rect x="925.70" y="138.45" width="12.90" height="1.50" fill="#c4c4c4" rx="0.7"/>
<rect x="928.54" y="138.65" width="7.22" height="1.10" fill="#3a86b8" />
<rect x="925.70" y="142.65" width="12.90" height="1.50" fill="#c4c4c4" rx="0.7"/>
<rect x="928.54" y="142.85" width="7.22" height="1.10" fill="#3a86b8" />
<circle cx="886.70" cy="115.30" r="8.00" fill="url(#lens)" />
<circle cx="887.30" cy="115.60" r="3.36" fill="#1c1c1c" stroke="#8a8a8a" stroke-width="0.7"/>
<circle cx="887.90" cy="115.90" r="1.44" fill="#b8b8b0" />
<circle cx="911.70" cy="113.80" r="7.00" fill="url(#lens)" />
<circle cx="912.30" cy="114.10" r="2.94" fill="#1c1c1c" stroke="#8a8a8a" stroke-width="0.7"/>
<circle cx="912.90" cy="114.40" r="1.26" fill="#b8b8b0" />
<circle cx="892.80" cy="138.80" r="7.00" fill="url(#lens)" />
<circle cx="893.40" cy="139.10" r="2.94" fill="#1c1c1c" stroke="#8a8a8a" stroke-width="0.7"/>
<circle cx="894.00" cy="139.40" r="1.26" fill="#b8b8b0" />
<circle cx="918.20" cy="140.00" r="8.30" fill="url(#lens)" />
<circle cx="918.80" cy="140.30" r="3.49" fill="#1c1c1c" stroke="#8a8a8a" stroke-width="0.7"/>
<circle cx="919.40" cy="140.60" r="1.49" fill="#b8b8b0" />
<rect x="864.00" y="153.00" width="36.00" height="14.00" fill="#080808" rx="5"/>
<rect x="905.00" y="153.00" width="37.00" height="14.00" fill="#080808" rx="5"/>
<path d="M860.7 167.9L943.8 167.9L943.8 194.8L860.7 194.8L858.5 181Z" fill="#747000" />
<rect x="889.70" y="178.90" width="26.30" height="15.90" fill="#343200" />
<rect x="916.00" y="178.90" width="27.80" height="15.90" fill="#4a4500" />
<rect x="871.20" y="169.90" width="21.60" height="6.40" fill="#d4d4d4" />
<rect x="879.00" y="169.90" width="6.00" height="6.40" fill="#6e6e6e" />
<rect x="872.70" y="170.40" width="0.70" height="5.40" fill="#a0a0a0" />
<rect x="874.70" y="170.40" width="0.70" height="5.40" fill="#a0a0a0" />
<rect x="876.70" y="170.40" width="0.70" height="5.40" fill="#a0a0a0" />
<rect x="886.70" y="170.40" width="0.70" height="5.40" fill="#a0a0a0" />
<rect x="888.70" y="170.40" width="0.70" height="5.40" fill="#a0a0a0" />
<rect x="890.70" y="170.40" width="0.70" height="5.40" fill="#a0a0a0" />
<rect x="912.60" y="169.90" width="21.60" height="6.40" fill="#d4d4d4" />
<rect x="920.40" y="169.90" width="6.00" height="6.40" fill="#6e6e6e" />
<rect x="914.10" y="170.40" width="0.70" height="5.40" fill="#a0a0a0" />
<rect x="916.10" y="170.40" width="0.70" height="5.40" fill="#a0a0a0" />
<rect x="918.10" y="170.40" width="0.70" height="5.40" fill="#a0a0a0" />
<rect x="928.10" y="170.40" width="0.70" height="5.40" fill="#a0a0a0" />
<rect x="930.10" y="170.40" width="0.70" height="5.40" fill="#a0a0a0" />
<rect x="932.10" y="170.40" width="0.70" height="5.40" fill="#a0a0a0" />
<circle cx="868.10" cy="186.80" r="6.40" fill="#6a6200" stroke="#c4b400" stroke-width="1.3"/>
<circle cx="882.70" cy="186.80" r="6.40" fill="#6a6200" stroke="#c4b400" stroke-width="1.3"/>
<circle cx="896.30" cy="186.80" r="6.70" fill="#a9b1b9" />
<circle cx="896.30" cy="186.80" r="3.60" fill="#8f979f" stroke="#c0c8d0" stroke-width="0.6"/>
<circle cx="909.10" cy="186.80" r="6.70" fill="#a9b1b9" />
<circle cx="909.10" cy="186.80" r="3.60" fill="#8f979f" stroke="#c0c8d0" stroke-width="0.6"/>
<circle cx="922.70" cy="186.80" r="6.70" fill="#8c0a12" />
<circle cx="922.70" cy="186.80" r="3.20" fill="#6c0008" />
<circle cx="936.40" cy="186.80" r="6.70" fill="#8c0a12" />
<circle cx="936.40" cy="186.80" r="3.20" fill="#6c0008" />
<rect x="862.00" y="195.20" width="81.00" height="1.70" fill="#f0f0e8" />
<rect x="818.80" y="197.00" width="123.30" height="27.90" fill="#181818" />
<rect x="818.80" y="224.70" width="124.10" height="1.80" fill="#eeeeea" />
<rect x="942.10" y="197.00" width="0.90" height="29.50" fill="#eeeeea" />
<rect x="839.00" y="200.00" width="0.60" height="23.00" fill="#242422" />
<rect x="866.00" y="200.00" width="0.60" height="23.00" fill="#242422" />
<rect x="893.00" y="200.00" width="0.60" height="23.00" fill="#242422" />
<rect x="920.00" y="200.00" width="0.60" height="23.00" fill="#242422" />
<rect x="822.00" y="209.50" width="116.00" height="0.70" fill="#242422" />
<rect x="926.00" y="201.00" width="12.00" height="1.00" fill="#2c2c2a" />
<rect x="926.00" y="204.00" width="12.00" height="1.00" fill="#2c2c2a" />
<rect x="848.30" y="196.40" width="13.20" height="7.60" fill="#000" />
<rect x="848.30" y="217.20" width="13.20" height="10.80" fill="#000" />
<rect x="908.20" y="196.40" width="12.80" height="7.60" fill="#000" />
<rect x="908.20" y="217.20" width="12.80" height="10.80" fill="#000" />
<path d="M270 234.5L814.5 234.5L814.5 372L340 372L267 363L267 341L270 338Z" fill="#ffffff" />
<path d="M816 240L816 236Q818 233.4 822 233.6L936 233.6Q940.5 233.6 941.5 236L941.5 240Z" fill="#ffffff" />
<rect x="286.00" y="240.00" width="657.80" height="74.00" fill="#0d0d0d" />
<rect x="808.50" y="314.00" width="135.30" height="5.00" fill="#0d0d0d" />
<rect x="808.50" y="319.00" width="1.00" height="53.00" fill="#000" />
<rect x="286.00" y="239.60" width="528.00" height="0.80" fill="#5a5018" />
<rect x="809.50" y="319.00" width="134.30" height="52.30" fill="#ffffff" />
<rect x="941.50" y="236.00" width="2.30" height="83.00" fill="#000" />
<rect x="340.50" y="240.00" width="0.60" height="74.00" fill="#171717" />
<rect x="401.00" y="240.00" width="0.60" height="74.00" fill="#171717" />
<rect x="473.00" y="240.00" width="0.60" height="74.00" fill="#171717" />
<rect x="520.00" y="240.00" width="0.60" height="74.00" fill="#171717" />
<rect x="595.00" y="240.00" width="0.60" height="74.00" fill="#171717" />
<rect x="650.00" y="240.00" width="0.60" height="74.00" fill="#171717" />
<rect x="680.00" y="240.00" width="0.60" height="74.00" fill="#171717" />
<rect x="506.50" y="250.75" width="72.40" height="121.25" fill="#030303" />
<rect x="510.10" y="254.00" width="29.15" height="111.70" fill="#0f0e0e" />
<rect x="510.10" y="353.70" width="29.15" height="12.00" fill="#181616" />
<rect x="519.72" y="357.50" width="9.91" height="0.90" fill="#4a4038" />
<rect x="510.10" y="254.00" width="29.15" height="1.00" fill="#2a2826" />
<rect x="546.15" y="254.00" width="29.15" height="111.70" fill="#0f0e0e" />
<rect x="546.15" y="353.70" width="29.15" height="12.00" fill="#181616" />
<rect x="555.77" y="357.50" width="9.91" height="0.90" fill="#4a4038" />
<rect x="546.15" y="254.00" width="29.15" height="1.00" fill="#2a2826" />
<rect x="510.90" y="367.30" width="62.70" height="4.70" fill="#ffffff" />
<rect x="506.50" y="367.30" width="4.40" height="4.70" fill="#5e6e60" />
<rect x="573.60" y="367.30" width="4.30" height="4.70" fill="#5e6e60" />
<rect x="536.70" y="247.20" width="12.00" height="2.00" fill="#050505" rx="1"/>
<rect x="753.00" y="250.75" width="55.75" height="121.25" fill="#030303" />
<rect x="756.60" y="254.00" width="20.82" height="111.70" fill="#0f0e0e" />
<rect x="756.60" y="353.70" width="20.82" height="12.00" fill="#181616" />
<rect x="763.47" y="357.50" width="7.08" height="0.90" fill="#4a4038" />
<rect x="756.60" y="254.00" width="20.82" height="1.00" fill="#2a2826" />
<rect x="784.33" y="254.00" width="20.82" height="111.70" fill="#0f0e0e" />
<rect x="784.33" y="353.70" width="20.82" height="12.00" fill="#181616" />
<rect x="791.20" y="357.50" width="7.08" height="0.90" fill="#4a4038" />
<rect x="784.33" y="254.00" width="20.82" height="1.00" fill="#2a2826" />
<rect x="757.40" y="367.30" width="46.05" height="4.70" fill="#ffffff" />
<rect x="753.00" y="367.30" width="4.40" height="4.70" fill="#5e6e60" />
<rect x="803.45" y="367.30" width="4.30" height="4.70" fill="#5e6e60" />
<rect x="774.88" y="247.20" width="12.00" height="2.00" fill="#050505" rx="1"/>
<path d="M291.5 318.5Q291.5 317.8 293 317.8L335.5 317.8Q337 317.8 337 319.5L337 358Q337 360.3 335 360L293.5 354.5Q291.5 354 291.5 352Z" fill="url(#vstripe)" stroke="#c0c0c0" stroke-width="0.6"/>
<rect x="286.80" y="314.00" width="0.60" height="47.00" fill="#b8b8b8" />
<rect x="341.00" y="314.00" width="0.70" height="58.00" fill="#b0b0b0" />
<rect x="344.50" y="327.50" width="53.50" height="44.50" fill="#ffffff" stroke="#c4c4c4" stroke-width="0.7"/>
<rect x="351.00" y="332.00" width="41.50" height="30.00" fill="url(#vstripe)" rx="1.5"/>
<rect x="278.50" y="351.50" width="6.00" height="2.10" fill="#111" />
<path d="M401.0 372.0 L402.6 346.2 C402.9 332.0 412.5 326.0 420.1 326.0 L445.6 326.0 C452.5 326.0 460.3 332.0 461.0 346.2 L462.5 372.0 Z" fill="#0d0d0d" />
<path d="M671.0 372.0 L672.6 346.2 C672.9 332.0 682.5 326.0 690.1 326.0 L715.6 326.0 C722.5 326.0 730.3 332.0 731.0 346.2 L732.5 372.0 Z" fill="#0d0d0d" />
<circle cx="501.40" cy="318.50" r="3.60" fill="#cf1f2c" />
<path d="M499.2 317.6L503.6 317.6L501.4 321Z" fill="#fff" />
<path d="M500.3 317.8L502.5 317.8L501.4 319.4Z" fill="#cf1f2c" />
<rect x="746.00" y="316.50" width="6.50" height="6.50" fill="#3a78c0" />
<rect x="746.50" y="318.50" width="6.00" height="1.50" fill="#cfe0f0" />
<circle cx="750.00" cy="326.30" r="2.50" fill="#2a8a3a" />
<rect x="737.50" y="346.75" width="9.25" height="9.00" fill="#fdfdf4" stroke="#9a9a80" stroke-width="0.6" rx="1"/>
<rect x="738.60" y="350.30" width="2.00" height="2.00" fill="#222" />
<rect x="581.00" y="349.30" width="87.50" height="22.70" fill="#ffffff" stroke="#c2c6c2" stroke-width="0.7"/>
<rect x="606.00" y="349.30" width="0.70" height="22.70" fill="#b8b8b8" />
<path d="M812 324L821 321L932 321L941.5 324" fill="none" stroke="#807a58" stroke-width="0.5"/>
<path d="M812 324.5L845 333Q852 335 853.5 342L860 371" fill="none" stroke="#55533f" stroke-width="0.55"/>
<path d="M941.5 324.5L912 333Q905.5 335 904 342L897 371" fill="none" stroke="#55533f" stroke-width="0.55"/>
<path d="M855 341.500L903 341.500M857.500 350L900.500 350" fill="none" stroke="#8c8c84" stroke-width="0.600"/>
<path d="M864.500 361V371M893.500 361V371" fill="none" stroke="#c8c8c0" stroke-width="0.500"/>
<path d="M818 341.2L850.5 341.2Q852 345 852.8 348.6L846.5 348.6Q845 348.6 844 349.8Q841.5 352.6 839 349.8Q837.8 348.4 836.6 349.8Q834 352.6 831.5 349.8Q830.5 348.6 829 348.6L822.5 348.6Q819.5 346 818 341.2Z" fill="#0a0a0a" />
<path d="M940 341.2L907.5 341.2Q906 345 905.2 348.6L911.5 348.6Q913 348.6 914 349.8Q916.5 352.6 919 349.8Q920.2 348.400 921.400 349.800Q924 352.600 926.500 349.800Q927.500 348.600 929 348.600L935.500 348.600Q938.500 346 940 341.200Z" fill="#0a0a0a" />
<circle cx="837.00" cy="363.50" r="1.40" fill="#e2e8e2" />
<circle cx="920.50" cy="363.50" r="1.40" fill="#e2e8e2" />
<rect x="835.00" y="319.00" width="1.00" height="2.50" fill="#333" />
<rect x="926.00" y="319.00" width="1.00" height="2.50" fill="#333" />
<path d="M272 382.8L820 382.8L822 381.2L937 381.2L939 383L941 445L938.5 510.8L815 510.8L747 518.2L267.5 518.2L267.5 469L272 466Z" fill="#ffffff" />
<path d="M272 388.2L800.8 388.2L800.8 462.3L350 462.3L338 466.7L274 466.7Z" fill="#0d0d0d" />
<path d="M266 388L272 388L274.5 466.5L266 469Z" fill="#000" />
<rect x="296.50" y="388.20" width="0.60" height="73.80" fill="#181818" />
<rect x="347.50" y="388.20" width="0.60" height="73.80" fill="#181818" />
<rect x="424.50" y="388.20" width="0.60" height="73.80" fill="#181818" />
<rect x="502.00" y="388.20" width="0.60" height="73.80" fill="#181818" />
<rect x="580.00" y="388.20" width="0.60" height="73.80" fill="#181818" />
<rect x="613.50" y="388.20" width="0.60" height="73.80" fill="#181818" />
<rect x="686.00" y="388.20" width="0.60" height="73.80" fill="#181818" />
<rect x="746.00" y="388.20" width="0.60" height="73.80" fill="#181818" />
<rect x="786.00" y="400.00" width="4.00" height="34.00" fill="#050505" />
<rect x="792.00" y="400.00" width="4.00" height="34.00" fill="#050505" />
<rect x="280.00" y="470.00" width="67.00" height="48.30" fill="#ffffff" stroke="#a8aca8" stroke-width="0.7"/>
<rect x="269.00" y="472.00" width="6.00" height="4.50" fill="#fafafa" stroke="#d0d0d0" stroke-width="0.5"/>
<path d="M355.0 518.2 L356.6 493.7 C356.9 480.2 366.5 474.5 373.9 474.5 L399.2 474.5 C406.0 474.5 413.8 480.2 414.5 493.7 L416.0 518.2 Z" fill="#0d0d0d" />
<path d="M625.0 518.2 L626.6 493.7 C626.9 480.2 636.5 474.5 643.9 474.5 L669.2 474.5 C676.0 474.5 683.8 480.2 684.5 493.7 L686.0 518.2 Z" fill="#0d0d0d" />
<rect x="419.00" y="497.50" width="80.00" height="20.70" fill="#ffffff" stroke="#c8c8c8" stroke-width="0.7"/>
<rect x="502.50" y="497.50" width="78.50" height="20.70" fill="#ffffff" stroke="#c8c8c8" stroke-width="0.7"/>
<rect x="582.50" y="497.50" width="40.50" height="20.70" fill="#ffffff" stroke="#c8c8c8" stroke-width="0.7"/>
<rect x="586.00" y="502.50" width="33.00" height="5.00" fill="url(#vstripe)" opacity="0.45"/>
<rect x="586.00" y="510.00" width="13.00" height="4.50" fill="url(#vstripe)" opacity="0.3"/>
<rect x="606.00" y="510.00" width="13.00" height="4.50" fill="url(#vstripe)" opacity="0.3"/>
<rect x="689.50" y="476.00" width="53.50" height="42.20" fill="#ffffff" stroke="#d4d4d4" stroke-width="0.7"/>
<rect x="745.80" y="462.00" width="0.80" height="56.00" fill="#707070" />
<rect x="799.50" y="462.00" width="0.70" height="50.50" fill="#8a8a8a" />
<path d="M752.5 469.5Q752.500 467.5 754.5 467.5L793 467.5Q795 467.5 795 469.5L795 502Q795 504 793 504.3L754.5 509Q752.5 509.300 752.5 507Z" fill="url(#vstripe)" />
<rect x="802.50" y="499.30" width="6.30" height="2.60" fill="#0a0a0a" rx="0.6"/>
<rect x="825.00" y="382.00" width="102.00" height="18.50" fill="#0d0d0d" />
<rect x="824.50" y="400.50" width="103.00" height="30.50" fill="#ffffff" stroke="#b8b8b8" stroke-width="0.6"/>
<rect x="824.50" y="433.00" width="103.00" height="56.50" fill="#ffffff" stroke="#b0b0b0" stroke-width="0.7" rx="4"/>
<rect x="831.00" y="404.50" width="24.00" height="6.00" fill="url(#hvent)" />
<rect x="831.00" y="437.50" width="24.00" height="14.50" fill="url(#hvent)" />
<rect x="858.00" y="404.50" width="36.00" height="6.00" fill="url(#hvent)" />
<rect x="858.00" y="437.50" width="36.00" height="14.50" fill="url(#hvent)" />
<rect x="897.50" y="404.50" width="23.50" height="6.00" fill="url(#hvent)" />
<rect x="897.50" y="437.50" width="23.50" height="14.50" fill="url(#hvent)" />
<circle cx="820.50" cy="458.75" r="2.10" fill="#000" />
<circle cx="932.00" cy="458.75" r="2.10" fill="#000" />
<circle cx="820.50" cy="469.50" r="2.10" fill="#000" />
<circle cx="932.00" cy="469.50" r="2.10" fill="#000" />
<circle cx="820.50" cy="480.00" r="2.10" fill="#000" />
<circle cx="932.00" cy="480.00" r="2.10" fill="#000" />
<circle cx="828.00" cy="503.00" r="2.30" fill="#000" />
<circle cx="923.00" cy="503.00" r="2.30" fill="#000" />
<path d="M835 489.500L835 510.800M917 489.500L917 510.800" fill="none" stroke="#b8b8b8" stroke-width="0.600"/>
<path d="M862 503.500L865 497.500L887 497.500L890 503.500" fill="none" stroke="#a8b8a8" stroke-width="0.600"/>
<rect x="857.00" y="430.30" width="5.00" height="1.20" fill="#222" />
<rect x="857.00" y="488.80" width="5.00" height="1.20" fill="#555" />
<rect x="891.00" y="430.30" width="5.00" height="1.20" fill="#222" />
<rect x="891.00" y="488.80" width="5.00" height="1.20" fill="#555" />
<rect x="266.00" y="518.80" width="316.50" height="114.20" fill="#ffffff" rx="13"/>
<rect x="270.00" y="518.00" width="310.00" height="2.00" fill="#ffffff" />
<rect x="294.00" y="523.00" width="263.00" height="105.00" fill="#e3e3e3" stroke="#8e8e8e" stroke-width="0.8"/>
<rect x="424.60" y="523.00" width="1.00" height="105.00" fill="#8a8a8a" />
<circle cx="296.50" cy="525.50" r="1.00" fill="#3a3a3a" />
<circle cx="359.50" cy="525.50" r="1.00" fill="#3a3a3a" />
<circle cx="422.00" cy="525.50" r="1.00" fill="#3a3a3a" />
<circle cx="428.00" cy="525.50" r="1.00" fill="#3a3a3a" />
<circle cx="490.50" cy="525.50" r="1.00" fill="#3a3a3a" />
<circle cx="553.50" cy="525.50" r="1.00" fill="#3a3a3a" />
<circle cx="296.50" cy="625.50" r="1.00" fill="#3a3a3a" />
<circle cx="359.50" cy="625.50" r="1.00" fill="#3a3a3a" />
<circle cx="422.00" cy="625.50" r="1.00" fill="#3a3a3a" />
<circle cx="428.00" cy="625.50" r="1.00" fill="#3a3a3a" />
<circle cx="490.50" cy="625.50" r="1.00" fill="#3a3a3a" />
<circle cx="553.50" cy="625.50" r="1.00" fill="#3a3a3a" />
<circle cx="422.30" cy="562.50" r="1.00" fill="#3a3a3a" />
<circle cx="428.00" cy="562.50" r="1.00" fill="#3a3a3a" />
<circle cx="422.30" cy="590.00" r="1.00" fill="#3a3a3a" />
<circle cx="428.00" cy="590.00" r="1.00" fill="#3a3a3a" />
<rect x="433.30" y="530.30" width="55.84" height="27.40" fill="url(#slots)" />
<rect x="495.50" y="530.30" width="55.84" height="27.40" fill="url(#slots2)" />
<rect x="433.30" y="593.20" width="55.84" height="27.40" fill="url(#slots3)" />
<rect x="495.50" y="593.20" width="55.84" height="27.40" fill="url(#slots4)" />
<circle cx="455.00" cy="575.30" r="14.00" fill="#2f2f2f" stroke="#555" stroke-width="0.6"/>
<circle cx="455.00" cy="575.30" r="12.20" fill="none" stroke="#262626" stroke-width="1"/>
<ellipse cx="455.0" cy="567.3" rx="3.6" ry="2.8" fill="#1f1f1f"/>
<ellipse cx="463.0" cy="575.3" rx="2.8" ry="3.6" fill="#1f1f1f"/>
<ellipse cx="455.0" cy="583.3" rx="3.6" ry="2.8" fill="#1f1f1f"/>
<ellipse cx="447.0" cy="575.3" rx="2.8" ry="3.6" fill="#1f1f1f"/>
<circle cx="455.00" cy="575.30" r="5.60" fill="#3c3c3c" />
<circle cx="455.00" cy="575.30" r="4.10" fill="#6c6c6c" />
<circle cx="491.60" cy="575.30" r="14.00" fill="#2f2f2f" stroke="#555" stroke-width="0.6"/>
<circle cx="491.60" cy="575.30" r="12.20" fill="none" stroke="#262626" stroke-width="1"/>
<ellipse cx="491.6" cy="567.3" rx="3.6" ry="2.8" fill="#1f1f1f"/>
<ellipse cx="499.6" cy="575.3" rx="2.8" ry="3.6" fill="#1f1f1f"/>
<ellipse cx="491.6" cy="583.3" rx="3.6" ry="2.8" fill="#1f1f1f"/>
<ellipse cx="483.6" cy="575.3" rx="2.8" ry="3.6" fill="#1f1f1f"/>
<circle cx="491.60" cy="575.30" r="5.60" fill="#3c3c3c" />
<circle cx="491.60" cy="575.30" r="4.10" fill="#6c6c6c" />
<circle cx="528.30" cy="575.30" r="14.00" fill="#2f2f2f" stroke="#555" stroke-width="0.6"/>
<circle cx="528.30" cy="575.30" r="12.20" fill="none" stroke="#262626" stroke-width="1"/>
<ellipse cx="528.3" cy="567.3" rx="3.6" ry="2.8" fill="#1f1f1f"/>
<ellipse cx="536.3" cy="575.3" rx="2.8" ry="3.6" fill="#1f1f1f"/>
<ellipse cx="528.3" cy="583.3" rx="3.6" ry="2.8" fill="#1f1f1f"/>
<ellipse cx="520.3" cy="575.3" rx="2.8" ry="3.6" fill="#1f1f1f"/>
<circle cx="528.30" cy="575.30" r="5.60" fill="#3c3c3c" />
<circle cx="528.30" cy="575.30" r="4.10" fill="#6c6c6c" />
<path d="M581.8 519L604 519Q609 519 609 524L609 628Q609 633.3 604 633.3L588 633.3Q583 633.3 583 628L583 600L581 580L583 560L583 524Z" fill="#151515" />
<rect x="587.00" y="523.40" width="19.00" height="47.60" fill="url(#capg)" rx="8"/>
<rect x="587.00" y="580.00" width="19.00" height="48.00" fill="url(#capg)" rx="8"/>
<rect x="609.00" y="518.40" width="157.80" height="61.10" fill="#e9e9e9" rx="3"/>
<rect x="609.00" y="518.40" width="157.80" height="9.90" fill="url(#dkg)" />
<rect x="609.50" y="528.00" width="51.90" height="51.50" fill="url(#boxg)" rx="4"/>
<rect x="614.60" y="518.60" width="18.70" height="4.90" fill="#e6e6e6" />
<rect x="637.80" y="523.30" width="19.70" height="5.10" fill="#ebebeb" />
<rect x="633.30" y="518.40" width="4.50" height="9.90" fill="#4c4c4c" opacity="0.7"/>
<rect x="661.95" y="528.00" width="51.90" height="51.50" fill="url(#boxg)" rx="4"/>
<rect x="667.05" y="518.60" width="18.70" height="4.90" fill="#e6e6e6" />
<rect x="690.25" y="523.30" width="19.70" height="5.10" fill="#ebebeb" />
<rect x="685.75" y="518.40" width="4.50" height="9.90" fill="#4c4c4c" opacity="0.7"/>
<rect x="714.40" y="528.00" width="51.90" height="51.50" fill="url(#boxg)" rx="4"/>
<rect x="719.50" y="518.60" width="18.70" height="4.90" fill="#e6e6e6" />
<rect x="742.70" y="523.30" width="19.70" height="5.10" fill="#ebebeb" />
<rect x="738.20" y="518.40" width="4.50" height="9.90" fill="#4c4c4c" opacity="0.7"/>
<rect x="616.50" y="540.50" width="39.00" height="27.50" fill="#5c5c5c" rx="4" filter="url(#blur2)" opacity="0.75"/>
<rect x="617.50" y="546.50" width="3.20" height="16.00" fill="#2c2c2c" rx="1.2"/>
<rect x="651.30" y="546.50" width="3.20" height="16.00" fill="#2c2c2c" rx="1.2"/>
<rect x="619.70" y="537.80" width="32.60" height="33.20" fill="url(#sqg)" rx="3.5"/>
<rect x="668.80" y="540.50" width="39.00" height="27.50" fill="#5c5c5c" rx="4" filter="url(#blur2)" opacity="0.75"/>
<rect x="669.80" y="546.50" width="3.20" height="16.00" fill="#2c2c2c" rx="1.2"/>
<rect x="703.60" y="546.50" width="3.20" height="16.00" fill="#2c2c2c" rx="1.2"/>
<rect x="672.00" y="537.80" width="32.60" height="33.20" fill="url(#sqg)" rx="3.5"/>
<rect x="721.20" y="540.50" width="39.00" height="27.50" fill="#5c5c5c" rx="4" filter="url(#blur2)" opacity="0.75"/>
<rect x="722.20" y="546.50" width="3.20" height="16.00" fill="#2c2c2c" rx="1.2"/>
<rect x="756.00" y="546.50" width="3.20" height="16.00" fill="#2c2c2c" rx="1.2"/>
<rect x="724.40" y="537.80" width="32.60" height="33.20" fill="url(#sqg)" rx="3.5"/>
<rect x="609.00" y="579.50" width="157.80" height="53.80" fill="#14171a" />
<rect x="615.60" y="586.30" width="40.40" height="40.90" fill="#8e7a4c" rx="3.5"/>
<rect x="624.10" y="585.30" width="17.90" height="1.90" fill="#14171a" />
<rect x="617.10" y="587.80" width="37.40" height="37.90" fill="#a08a58" rx="3" opacity="0.6"/>
<rect x="622.40" y="593.00" width="27.60" height="21.40" fill="#cfcfc6" rx="2.5"/>
<circle cx="635.80" cy="603.70" r="9.20" fill="#2c2a2a" />
<circle cx="635.80" cy="603.70" r="7.60" fill="none" stroke="#d2563c" stroke-width="2" stroke-dasharray="4.2 2.6"/>
<circle cx="635.80" cy="603.70" r="4.60" fill="none" stroke="#8a8a8a" stroke-width="1"/>
<circle cx="635.80" cy="603.70" r="2.30" fill="none" stroke="#b0b0b0" stroke-width="0.8"/>
<circle cx="635.80" cy="603.70" r="0.90" fill="#3060a0" />
<path d="M628.2 627.2A7.6 7.6 0 0 1 643.4 627.2Z" fill="#2a2418" />
<path d="M636.6 627L635.0 621" fill="none" stroke="#c02020" stroke-width="0.8"/>
<rect x="667.80" y="586.30" width="40.60" height="40.90" fill="#8e7a4c" rx="3.5"/>
<rect x="676.30" y="585.30" width="18.10" height="1.90" fill="#14171a" />
<rect x="669.30" y="587.80" width="37.60" height="37.90" fill="#a08a58" rx="3" opacity="0.6"/>
<rect x="674.60" y="593.00" width="27.80" height="21.40" fill="#cfcfc6" rx="2.5"/>
<circle cx="688.10" cy="603.70" r="9.20" fill="#2c2a2a" />
<circle cx="688.10" cy="603.70" r="7.60" fill="none" stroke="#d2563c" stroke-width="2" stroke-dasharray="4.2 2.6"/>
<circle cx="688.10" cy="603.70" r="4.60" fill="none" stroke="#8a8a8a" stroke-width="1"/>
<circle cx="688.10" cy="603.70" r="2.30" fill="none" stroke="#b0b0b0" stroke-width="0.8"/>
<circle cx="688.10" cy="603.70" r="0.90" fill="#3060a0" />
<path d="M680.5 627.2A7.6 7.6 0 0 1 695.7 627.2Z" fill="#2a2418" />
<path d="M688.9 627L687.3 621" fill="none" stroke="#c02020" stroke-width="0.8"/>
<rect x="720.30" y="586.30" width="40.40" height="40.90" fill="#8e7a4c" rx="3.5"/>
<rect x="728.80" y="585.30" width="17.90" height="1.90" fill="#14171a" />
<rect x="721.80" y="587.80" width="37.40" height="37.90" fill="#a08a58" rx="3" opacity="0.6"/>
<rect x="727.10" y="593.00" width="27.60" height="21.40" fill="#cfcfc6" rx="2.5"/>
<circle cx="740.50" cy="603.70" r="9.20" fill="#2c2a2a" />
<circle cx="740.50" cy="603.70" r="7.60" fill="none" stroke="#d2563c" stroke-width="2" stroke-dasharray="4.2 2.6"/>
<circle cx="740.50" cy="603.70" r="4.60" fill="none" stroke="#8a8a8a" stroke-width="1"/>
<circle cx="740.50" cy="603.70" r="2.30" fill="none" stroke="#b0b0b0" stroke-width="0.8"/>
<circle cx="740.50" cy="603.70" r="0.90" fill="#3060a0" />
<path d="M732.9 627.2A7.6 7.6 0 0 1 748.1 627.2Z" fill="#2a2418" />
<path d="M741.3 627L739.7 621" fill="none" stroke="#c02020" stroke-width="0.8"/>
<path d="M766.8 518.2L815 512.6L827.5 512.6L827.5 633.3L766.8 633.3Z" fill="#1e1e1e" />
<rect x="827.50" y="516.30" width="116.50" height="117.00" fill="#121212" />
<rect x="828.30" y="517.00" width="22.70" height="115.50" fill="#171717" stroke="#232327" stroke-width="0.7"/>
<rect x="828.30" y="517.00" width="22.70" height="5.50" fill="#101010" />
<rect x="828.30" y="626.00" width="22.70" height="6.50" fill="#101010" />
<rect x="835.30" y="519.50" width="4.00" height="1.20" fill="#030303" />
<rect x="842.00" y="519.50" width="4.00" height="1.20" fill="#030303" />
<rect x="835.30" y="628.50" width="4.00" height="1.20" fill="#030303" />
<rect x="854.80" y="517.00" width="21.20" height="115.50" fill="#171717" stroke="#232327" stroke-width="0.7"/>
<rect x="854.80" y="517.00" width="21.20" height="5.50" fill="#101010" />
<rect x="854.80" y="626.00" width="21.20" height="6.50" fill="#101010" />
<rect x="861.80" y="519.50" width="4.00" height="1.20" fill="#030303" />
<rect x="867.00" y="519.50" width="4.00" height="1.20" fill="#030303" />
<rect x="861.80" y="628.50" width="4.00" height="1.20" fill="#030303" />
<rect x="877.50" y="517.00" width="29.50" height="115.50" fill="#171717" stroke="#232327" stroke-width="0.7"/>
<rect x="877.50" y="517.00" width="29.50" height="5.50" fill="#101010" />
<rect x="877.50" y="626.00" width="29.50" height="6.50" fill="#101010" />
<rect x="884.50" y="519.50" width="4.00" height="1.20" fill="#030303" />
<rect x="898.00" y="519.50" width="4.00" height="1.20" fill="#030303" />
<rect x="884.50" y="628.50" width="4.00" height="1.20" fill="#030303" />
<rect x="911.70" y="517.00" width="28.60" height="115.50" fill="#171717" stroke="#232327" stroke-width="0.7"/>
<rect x="911.70" y="517.00" width="28.60" height="5.50" fill="#101010" />
<rect x="911.70" y="626.00" width="28.60" height="6.50" fill="#101010" />
<rect x="918.70" y="519.50" width="4.00" height="1.20" fill="#030303" />
<rect x="931.30" y="519.50" width="4.00" height="1.20" fill="#030303" />
<rect x="918.70" y="628.50" width="4.00" height="1.20" fill="#030303" />
<rect x="830.40" y="524.30" width="20.10" height="77.00" fill="#070707" />
<rect x="830.40" y="524.30" width="20.10" height="77.00" fill="url(#grit)" opacity="0.7"/>
<rect x="830.40" y="604.00" width="20.10" height="15.50" fill="#111" stroke="#26262a" stroke-width="0.5"/>
<rect x="833.00" y="605.30" width="14.80" height="11.10" fill="#030303" />
<rect x="857.00" y="524.00" width="18.00" height="95.50" fill="#181818" stroke="#222" stroke-width="0.5"/>
<rect x="881.20" y="524.70" width="24.10" height="60.70" fill="#0e0e0e" />
<rect x="881.20" y="524.70" width="24.10" height="60.70" fill="url(#grit2)" opacity="0.75"/>
<rect x="880.00" y="524.00" width="26.00" height="95.50" fill="none" stroke="#222" stroke-width="0.5"/>
<rect x="913.50" y="523.00" width="25.00" height="97.00" fill="#1a1a1a" />
<rect x="267.00" y="633.30" width="220.00" height="140.90" fill="url(#acg)" rx="9"/>
<path d="M267 660Q380 656 487 659.5L487 748.5Q380 752 267 748Z" fill="#dadada" />
<rect x="267.00" y="660.00" width="12.00" height="88.00" fill="#d0d0d0" />
<rect x="279.00" y="661.00" width="8.50" height="86.50" fill="#c4c4c4" />
<rect x="448.00" y="659.50" width="39.00" height="89.00" fill="#e4e4e4" />
<rect x="306.50" y="642.40" width="147.00" height="3.40" fill="#b2b2b2" rx="1.7"/>
<rect x="306.50" y="760.30" width="147.00" height="3.70" fill="#b2b2b2" rx="1.7"/>
<rect x="287.70" y="659.80" width="47.50" height="19.70" fill="url(#mesh)" stroke="#f2f2f2" stroke-width="0.8"/>
<rect x="287.70" y="684.40" width="47.50" height="39.20" fill="url(#mesh)" stroke="#f2f2f2" stroke-width="0.8"/>
<rect x="287.70" y="727.80" width="47.50" height="19.60" fill="url(#mesh)" stroke="#f2f2f2" stroke-width="0.8"/>
<rect x="281.30" y="667.00" width="2.00" height="11.00" fill="#555" rx="0.8"/>
<rect x="281.30" y="688.00" width="2.00" height="11.00" fill="#555" rx="0.8"/>
<rect x="281.30" y="708.00" width="2.00" height="11.00" fill="#555" rx="0.8"/>
<rect x="281.30" y="729.00" width="2.00" height="11.00" fill="#555" rx="0.8"/>
<circle cx="349.00" cy="668.30" r="9.00" fill="url(#fan2)" stroke="#8a8a8a" stroke-width="0.5"/>
<circle cx="349.00" cy="668.30" r="1.60" fill="#e8e8f0" />
<circle cx="349.00" cy="685.90" r="9.00" fill="url(#fan2)" stroke="#8a8a8a" stroke-width="0.5"/>
<circle cx="349.00" cy="685.90" r="1.60" fill="#e8e8f0" />
<circle cx="349.00" cy="703.60" r="9.00" fill="url(#fan2)" stroke="#8a8a8a" stroke-width="0.5"/>
<circle cx="349.00" cy="703.60" r="1.60" fill="#e8e8f0" />
<circle cx="349.00" cy="721.30" r="9.00" fill="url(#fan2)" stroke="#8a8a8a" stroke-width="0.5"/>
<circle cx="349.00" cy="721.30" r="1.60" fill="#e8e8f0" />
<circle cx="349.00" cy="739.20" r="9.00" fill="url(#fan2)" stroke="#8a8a8a" stroke-width="0.5"/>
<circle cx="349.00" cy="739.20" r="1.60" fill="#e8e8f0" />
<rect x="337.25" y="659.50" width="0.70" height="88.80" fill="#6a6a6a" />
<rect x="360.05" y="659.50" width="0.70" height="88.80" fill="#6a6a6a" />
<rect x="447.65" y="659.50" width="0.70" height="88.80" fill="#6a6a6a" />
<rect x="279.00" y="659.10" width="208.00" height="0.80" fill="#8a8a8a" />
<rect x="279.00" y="747.90" width="208.00" height="0.80" fill="#8a8a8a" />
<rect x="360.40" y="681.00" width="87.60" height="0.70" fill="#6a6a6a" />
<rect x="360.40" y="725.20" width="87.60" height="0.70" fill="#6a6a6a" />
<text x="305.3" y="640.6" font-family="Liberation Sans,Noto Sans CJK SC,sans-serif" font-size="4.6" font-weight="bold" fill="#111">收割发面</text>
<text transform="translate(440.7 638.2) scale(-1 1)" font-family="Liberation Sans,sans-serif" font-size="3.9" font-weight="bold" fill="#222">THERMO KING</text>
<text x="412" y="769.3" font-family="Liberation Sans,sans-serif" font-size="3.9" font-weight="bold" fill="#222">THERMO KING</text>
<rect x="443.00" y="636.00" width="4.60" height="4.30" fill="#3a7ab8" />
<rect x="443.00" y="765.60" width="4.60" height="4.40" fill="#3a7ab8" />
<text transform="translate(490.5 634.5) rotate(90)" font-family="Liberation Sans,Noto Sans CJK SC,sans-serif" font-size="32" font-weight="900" fill="#9a9aa0" letter-spacing="2.2" stroke="#9a9aa0" stroke-width="0.8" stroke-linejoin="round">激王速冷</text>
<ellipse cx="602.5" cy="668" rx="21" ry="14" fill="#0a0a0a"/>
<ellipse cx="602.5" cy="738" rx="21" ry="14" fill="#0a0a0a"/>
<rect x="655.00" y="636.50" width="21.30" height="137.50" fill="url(#ribs)" />
<rect x="679.00" y="636.50" width="21.00" height="137.50" fill="url(#ribs)" />
<rect x="702.50" y="636.50" width="21.50" height="137.50" fill="url(#ribs)" />
<rect x="726.30" y="636.50" width="21.70" height="137.50" fill="url(#ribs)" />
<rect x="750.60" y="632.60" width="49.30" height="141.40" fill="#050400" />
<rect x="761.00" y="632.80" width="38.90" height="7.80" fill="url(#yv2)" />
<rect x="750.60" y="640.40" width="49.30" height="7.45" fill="url(#yv2)" />
<rect x="750.60" y="647.85" width="49.30" height="7.45" fill="url(#yv2)" />
<rect x="750.60" y="655.30" width="49.30" height="7.45" fill="url(#yv2)" />
<rect x="750.60" y="662.75" width="49.30" height="7.45" fill="url(#yv2)" />
<rect x="750.60" y="670.20" width="49.30" height="7.45" fill="url(#yv2)" />
<ellipse cx="766.8" cy="636.6" rx="2.7" ry="2.9" fill="#050400"/>
<ellipse cx="776.6" cy="636.6" rx="2.7" ry="2.9" fill="#050400"/>
<ellipse cx="786.4" cy="636.6" rx="2.7" ry="2.9" fill="#050400"/>
<ellipse cx="796.2" cy="636.6" rx="2.7" ry="2.9" fill="#050400"/>
<ellipse cx="761.9" cy="644.1" rx="2.7" ry="2.9" fill="#050400"/>
<ellipse cx="771.7" cy="644.1" rx="2.7" ry="2.9" fill="#050400"/>
<ellipse cx="781.5" cy="644.1" rx="2.7" ry="2.9" fill="#050400"/>
<ellipse cx="791.3" cy="644.1" rx="2.7" ry="2.9" fill="#050400"/>
<ellipse cx="757.0" cy="651.5" rx="2.7" ry="2.9" fill="#050400"/>
<ellipse cx="766.8" cy="651.5" rx="2.7" ry="2.9" fill="#050400"/>
<ellipse cx="776.6" cy="651.5" rx="2.7" ry="2.9" fill="#050400"/>
<ellipse cx="786.4" cy="651.5" rx="2.7" ry="2.9" fill="#050400"/>
<ellipse cx="796.2" cy="651.5" rx="2.7" ry="2.9" fill="#050400"/>
<ellipse cx="761.9" cy="659.0" rx="2.7" ry="2.9" fill="#050400"/>
<ellipse cx="771.7" cy="659.0" rx="2.7" ry="2.9" fill="#050400"/>
<ellipse cx="781.5" cy="659.0" rx="2.7" ry="2.9" fill="#050400"/>
<ellipse cx="791.3" cy="659.0" rx="2.7" ry="2.9" fill="#050400"/>
<ellipse cx="757.0" cy="666.4" rx="2.7" ry="2.9" fill="#050400"/>
<ellipse cx="766.8" cy="666.4" rx="2.7" ry="2.9" fill="#050400"/>
<ellipse cx="776.6" cy="666.4" rx="2.7" ry="2.9" fill="#050400"/>
<ellipse cx="786.4" cy="666.4" rx="2.7" ry="2.9" fill="#050400"/>
<ellipse cx="796.2" cy="666.4" rx="2.7" ry="2.9" fill="#050400"/>
<ellipse cx="761.9" cy="673.9" rx="2.7" ry="2.9" fill="#050400"/>
<ellipse cx="771.7" cy="673.9" rx="2.7" ry="2.9" fill="#050400"/>
<ellipse cx="781.5" cy="673.9" rx="2.7" ry="2.9" fill="#050400"/>
<ellipse cx="791.3" cy="673.9" rx="2.7" ry="2.9" fill="#050400"/>
<path d="M754.6 640.4L757.0 638.7L759.4 640.4L757.0 642.1Z" fill="#050400" />
<path d="M764.4 640.4L766.8 638.7L769.2 640.4L766.8 642.1Z" fill="#050400" />
<path d="M774.2 640.4L776.6 638.7L779.0 640.4L776.6 642.1Z" fill="#050400" />
<path d="M784.0 640.4L786.4 638.7L788.8 640.4L786.4 642.1Z" fill="#050400" />
<path d="M793.8 640.4L796.2 638.7L798.6 640.4L796.2 642.1Z" fill="#050400" />
<path d="M749.7 647.9L752.1 646.1L754.5 647.9L752.1 649.6Z" fill="#050400" />
<path d="M759.5 647.9L761.9 646.1L764.3 647.9L761.9 649.6Z" fill="#050400" />
<path d="M769.3 647.9L771.7 646.1L774.1 647.9L771.7 649.6Z" fill="#050400" />
<path d="M779.1 647.9L781.5 646.1L783.9 647.9L781.5 649.6Z" fill="#050400" />
<path d="M788.9 647.9L791.3 646.1L793.7 647.9L791.3 649.6Z" fill="#050400" />
<path d="M754.6 655.3L757.0 653.6L759.4 655.3L757.0 657.0Z" fill="#050400" />
<path d="M764.4 655.3L766.8 653.6L769.2 655.3L766.8 657.0Z" fill="#050400" />
<path d="M774.2 655.3L776.6 653.6L779.0 655.3L776.6 657.0Z" fill="#050400" />
<path d="M784.0 655.3L786.4 653.6L788.8 655.3L786.4 657.0Z" fill="#050400" />
<path d="M793.8 655.3L796.2 653.6L798.6 655.3L796.2 657.0Z" fill="#050400" />
<path d="M749.7 662.8L752.1 661.0L754.5 662.8L752.1 664.5Z" fill="#050400" />
<path d="M759.5 662.8L761.9 661.0L764.3 662.8L761.9 664.5Z" fill="#050400" />
<path d="M769.3 662.8L771.7 661.0L774.1 662.8L771.7 664.5Z" fill="#050400" />
<path d="M779.1 662.8L781.5 661.0L783.9 662.8L781.5 664.5Z" fill="#050400" />
<path d="M788.9 662.8L791.3 661.0L793.7 662.8L791.3 664.5Z" fill="#050400" />
<path d="M754.6 670.2L757.0 668.5L759.4 670.2L757.0 671.9Z" fill="#050400" />
<path d="M764.4 670.2L766.8 668.5L769.2 670.2L766.8 671.9Z" fill="#050400" />
<path d="M774.2 670.2L776.6 668.5L779.0 670.2L776.6 671.9Z" fill="#050400" />
<path d="M784.0 670.2L786.4 668.5L788.8 670.2L786.4 671.9Z" fill="#050400" />
<path d="M793.8 670.2L796.2 668.5L798.6 670.2L796.2 671.9Z" fill="#050400" />
<path d="M749.7 677.6L752.1 675.9L754.5 677.6L752.1 679.4Z" fill="#050400" />
<path d="M759.5 677.6L761.9 675.9L764.3 677.6L761.9 679.4Z" fill="#050400" />
<path d="M769.3 677.6L771.7 675.9L774.1 677.6L771.7 679.4Z" fill="#050400" />
<path d="M779.1 677.6L781.5 675.9L783.9 677.6L781.5 679.4Z" fill="#050400" />
<path d="M788.9 677.6L791.3 675.9L793.7 677.6L791.3 679.4Z" fill="#050400" />
<rect x="750.60" y="679.30" width="49.30" height="18.10" fill="url(#yv)" />
<rect x="758.20" y="679.30" width="1.20" height="18.10" fill="#2a2200" opacity="0.55"/>
<rect x="766.40" y="679.30" width="1.20" height="18.10" fill="#2a2200" opacity="0.55"/>
<rect x="774.60" y="679.30" width="1.20" height="18.10" fill="#2a2200" opacity="0.55"/>
<rect x="782.80" y="679.30" width="1.20" height="18.10" fill="#2a2200" opacity="0.55"/>
<rect x="791.00" y="679.30" width="1.20" height="18.10" fill="#2a2200" opacity="0.55"/>
<rect x="750.60" y="700.90" width="49.30" height="17.30" fill="url(#yv)" />
<rect x="758.20" y="700.90" width="1.20" height="17.30" fill="#2a2200" opacity="0.55"/>
<rect x="766.40" y="700.90" width="1.20" height="17.30" fill="#2a2200" opacity="0.55"/>
<rect x="774.60" y="700.90" width="1.20" height="17.30" fill="#2a2200" opacity="0.55"/>
<rect x="782.80" y="700.90" width="1.20" height="17.30" fill="#2a2200" opacity="0.55"/>
<rect x="791.00" y="700.90" width="1.20" height="17.30" fill="#2a2200" opacity="0.55"/>
<rect x="750.60" y="721.60" width="48.20" height="13.80" fill="#bfa000" />
<rect x="750.60" y="721.60" width="48.20" height="1.60" fill="#e0c21a" />
<rect x="755.30" y="725.00" width="6.20" height="7.80" fill="#3e3608" rx="1.2" filter="url(#blur1)" opacity="0.9"/>
<rect x="762.70" y="722.60" width="0.90" height="12.80" fill="#6a5800" opacity="0.6"/>
<rect x="766.90" y="725.00" width="6.20" height="7.80" fill="#3e3608" rx="1.2" filter="url(#blur1)" opacity="0.9"/>
<rect x="774.30" y="722.60" width="0.90" height="12.80" fill="#6a5800" opacity="0.6"/>
<rect x="778.60" y="725.00" width="6.20" height="7.80" fill="#3e3608" rx="1.2" filter="url(#blur1)" opacity="0.9"/>
<rect x="786.00" y="722.60" width="0.90" height="12.80" fill="#6a5800" opacity="0.6"/>
<rect x="790.20" y="725.00" width="6.20" height="7.80" fill="#3e3608" rx="1.2" filter="url(#blur1)" opacity="0.9"/>
<rect x="797.60" y="722.60" width="0.90" height="12.80" fill="#6a5800" opacity="0.6"/>
<path d="M752.2 721.4L754.8 721.4L753.5 719.2Z" fill="#bfa000" />
<path d="M763.7 721.4L766.3 721.4L765.0 719.2Z" fill="#bfa000" />
<path d="M775.3 721.4L777.9 721.4L776.6 719.2Z" fill="#bfa000" />
<path d="M787.0 721.4L789.6 721.4L788.3 719.2Z" fill="#bfa000" />
<path d="M796.2 721.4L798.8 721.4L797.5 719.2Z" fill="#bfa000" />
<rect x="750.60" y="738.90" width="48.20" height="13.80" fill="#bfa000" />
<rect x="750.60" y="738.90" width="48.20" height="1.60" fill="#e0c21a" />
<rect x="755.30" y="742.30" width="6.20" height="7.80" fill="#3e3608" rx="1.2" filter="url(#blur1)" opacity="0.9"/>
<rect x="762.70" y="739.90" width="0.90" height="12.80" fill="#6a5800" opacity="0.6"/>
<rect x="766.90" y="742.30" width="6.20" height="7.80" fill="#3e3608" rx="1.2" filter="url(#blur1)" opacity="0.9"/>
<rect x="774.30" y="739.90" width="0.90" height="12.80" fill="#6a5800" opacity="0.6"/>
<rect x="778.60" y="742.30" width="6.20" height="7.80" fill="#3e3608" rx="1.2" filter="url(#blur1)" opacity="0.9"/>
<rect x="786.00" y="739.90" width="0.90" height="12.80" fill="#6a5800" opacity="0.6"/>
<rect x="790.20" y="742.30" width="6.20" height="7.80" fill="#3e3608" rx="1.2" filter="url(#blur1)" opacity="0.9"/>
<rect x="797.60" y="739.90" width="0.90" height="12.80" fill="#6a5800" opacity="0.6"/>
<path d="M752.2 738.7L754.8 738.7L753.5 736.5Z" fill="#bfa000" />
<path d="M763.7 738.7L766.3 738.7L765.0 736.5Z" fill="#bfa000" />
<path d="M775.3 738.7L777.9 738.7L776.6 736.5Z" fill="#bfa000" />
<path d="M787.0 738.7L789.6 738.7L788.3 736.5Z" fill="#bfa000" />
<path d="M796.2 738.7L798.8 738.7L797.5 736.5Z" fill="#bfa000" />
<rect x="750.60" y="756.20" width="48.20" height="17.30" fill="#bfa000" />
<rect x="750.60" y="756.20" width="48.20" height="1.60" fill="#e0c21a" />
<rect x="755.30" y="759.60" width="6.20" height="11.30" fill="#3e3608" rx="1.2" filter="url(#blur1)" opacity="0.9"/>
<rect x="762.70" y="757.20" width="0.90" height="16.30" fill="#6a5800" opacity="0.6"/>
<rect x="766.90" y="759.60" width="6.20" height="11.30" fill="#3e3608" rx="1.2" filter="url(#blur1)" opacity="0.9"/>
<rect x="774.30" y="757.20" width="0.90" height="16.30" fill="#6a5800" opacity="0.6"/>
<rect x="778.60" y="759.60" width="6.20" height="11.30" fill="#3e3608" rx="1.2" filter="url(#blur1)" opacity="0.9"/>
<rect x="786.00" y="757.20" width="0.90" height="16.30" fill="#6a5800" opacity="0.6"/>
<rect x="790.20" y="759.60" width="6.20" height="11.30" fill="#3e3608" rx="1.2" filter="url(#blur1)" opacity="0.9"/>
<rect x="797.60" y="757.20" width="0.90" height="16.30" fill="#6a5800" opacity="0.6"/>
<path d="M752.2 756.0L754.8 756.0L753.5 753.8Z" fill="#bfa000" />
<path d="M763.7 756.0L766.3 756.0L765.0 753.8Z" fill="#bfa000" />
<path d="M775.3 756.0L777.9 756.0L776.6 753.8Z" fill="#bfa000" />
<path d="M787.0 756.0L789.6 756.0L788.3 753.8Z" fill="#bfa000" />
<path d="M796.2 756.0L798.8 756.0L797.5 753.8Z" fill="#bfa000" />
<rect x="799.90" y="648.20" width="7.30" height="82.10" fill="url(#pipe)" />
<rect x="807.20" y="648.20" width="7.40" height="82.10" fill="url(#pipe)" />
<rect x="816.30" y="636.90" width="6.50" height="93.40" fill="url(#pipe)" />
<rect x="822.80" y="636.90" width="6.50" height="93.40" fill="url(#pipe)" />
<rect x="829.30" y="640.00" width="2.50" height="90.30" fill="#4a3c00" />
<rect x="799.90" y="732.90" width="6.38" height="38.80" fill="url(#pipe)" />
<rect x="806.28" y="732.90" width="6.38" height="38.80" fill="url(#pipe)" />
<rect x="812.66" y="732.90" width="6.38" height="38.80" fill="url(#pipe)" />
<rect x="819.04" y="732.90" width="6.38" height="38.80" fill="url(#pipe)" />
<rect x="825.42" y="732.90" width="6.38" height="38.80" fill="url(#pipe)" />
<rect x="799.90" y="730.30" width="31.90" height="2.60" fill="#0a0800" />
<rect x="832.70" y="633.50" width="41.50" height="94.20" fill="#0a0800" />
<path d="M833.2 637.7L837.1 633.5L843.1 633.5L843.1 674.9L838.5 678.4L833.1 675.4Z" fill="url(#pipe2)" />
<rect x="837.90" y="637.50" width="1.60" height="35.90" fill="#9a8200" opacity="0.55"/>
<circle cx="840.50" cy="636.10" r="1.00" fill="#141000" />
<circle cx="836.30" cy="676.00" r="1.00" fill="#141000" />
<path d="M843.5 637.7L847.5 633.5L853.5 633.5L853.5 674.9L848.9 678.4L843.5 675.4Z" fill="url(#pipe2)" />
<rect x="848.25" y="637.50" width="1.60" height="35.90" fill="#9a8200" opacity="0.55"/>
<circle cx="850.85" cy="636.10" r="1.00" fill="#141000" />
<circle cx="846.65" cy="676.00" r="1.00" fill="#141000" />
<path d="M853.9 637.7L857.8 633.5L863.8 633.5L863.8 674.9L859.2 678.4L853.8 675.4Z" fill="url(#pipe2)" />
<rect x="858.60" y="637.50" width="1.60" height="35.90" fill="#9a8200" opacity="0.55"/>
<circle cx="861.20" cy="636.10" r="1.00" fill="#141000" />
<circle cx="857.00" cy="676.00" r="1.00" fill="#141000" />
<path d="M864.2 637.7L868.1 633.5L874.1 633.5L874.1 674.9L869.5 678.4L864.1 675.4Z" fill="url(#pipe2)" />
<rect x="868.95" y="637.50" width="1.60" height="35.90" fill="#9a8200" opacity="0.55"/>
<circle cx="871.55" cy="636.10" r="1.00" fill="#141000" />
<circle cx="867.35" cy="676.00" r="1.00" fill="#141000" />
<path d="M833.2 684.3L837.1 680.1L843.1 680.1L843.1 724.2L838.5 727.7L833.1 724.7Z" fill="url(#pipe2)" />
<rect x="837.90" y="684.10" width="1.60" height="38.60" fill="#9a8200" opacity="0.55"/>
<circle cx="840.50" cy="682.70" r="1.00" fill="#141000" />
<circle cx="836.30" cy="725.30" r="1.00" fill="#141000" />
<path d="M843.5 684.3L847.5 680.1L853.5 680.1L853.5 724.2L848.9 727.7L843.5 724.7Z" fill="url(#pipe2)" />
<rect x="848.25" y="684.10" width="1.60" height="38.60" fill="#9a8200" opacity="0.55"/>
<circle cx="850.85" cy="682.70" r="1.00" fill="#141000" />
<circle cx="846.65" cy="725.30" r="1.00" fill="#141000" />
<path d="M853.9 684.3L857.8 680.1L863.8 680.1L863.8 724.2L859.2 727.7L853.8 724.7Z" fill="url(#pipe2)" />
<rect x="858.60" y="684.10" width="1.60" height="38.60" fill="#9a8200" opacity="0.55"/>
<circle cx="861.20" cy="682.70" r="1.00" fill="#141000" />
<circle cx="857.00" cy="725.30" r="1.00" fill="#141000" />
<path d="M864.2 684.3L868.1 680.1L874.1 680.1L874.1 724.2L869.5 727.7L864.1 724.7Z" fill="url(#pipe2)" />
<rect x="868.95" y="684.10" width="1.60" height="38.60" fill="#9a8200" opacity="0.55"/>
<circle cx="871.55" cy="682.70" r="1.00" fill="#141000" />
<circle cx="867.35" cy="725.30" r="1.00" fill="#141000" />
<rect x="832.70" y="728.50" width="41.50" height="45.50" fill="#040404" />
<circle cx="837.90" cy="733.70" r="3.10" fill="#1f1f23" />
<circle cx="848.00" cy="733.70" r="3.10" fill="#1f1f23" />
<circle cx="858.40" cy="733.70" r="3.10" fill="#1f1f23" />
<circle cx="868.60" cy="733.70" r="3.10" fill="#1f1f23" />
<circle cx="837.90" cy="744.80" r="3.10" fill="#1f1f23" />
<circle cx="848.00" cy="744.80" r="3.10" fill="#1f1f23" />
<circle cx="858.40" cy="744.80" r="3.10" fill="#1f1f23" />
<circle cx="868.60" cy="744.80" r="3.10" fill="#1f1f23" />
<circle cx="837.90" cy="755.70" r="3.10" fill="#1f1f23" />
<circle cx="848.00" cy="755.70" r="3.10" fill="#1f1f23" />
<circle cx="858.40" cy="755.70" r="3.10" fill="#1f1f23" />
<circle cx="868.60" cy="755.70" r="3.10" fill="#1f1f23" />
<circle cx="837.90" cy="766.80" r="3.10" fill="#1f1f23" />
<circle cx="848.00" cy="766.80" r="3.10" fill="#1f1f23" />
<circle cx="858.40" cy="766.80" r="3.10" fill="#1f1f23" />
<circle cx="868.60" cy="766.80" r="3.10" fill="#1f1f23" />
<circle cx="848.00" cy="755.70" r="1.50" fill="#44444a" />
<circle cx="858.40" cy="755.70" r="1.50" fill="#44444a" />
<circle cx="868.60" cy="744.80" r="1.50" fill="#44444a" />
<circle cx="858.40" cy="766.80" r="1.50" fill="#44444a" />
<rect x="874.40" y="633.30" width="69.60" height="140.70" fill="#0a0a0a" />
<rect x="878.00" y="636.00" width="44.00" height="27.00" fill="#151515" />
<rect x="890.00" y="637.00" width="16.00" height="13.00" fill="#1f1f1f" />
<rect x="896.00" y="650.00" width="20.00" height="12.00" fill="#1b1b1b" />
<rect x="878.90" y="663.50" width="42.60" height="37.40" fill="#1f1f1f" />
<rect x="884.00" y="671.00" width="8.00" height="17.00" fill="#121212" />
<rect x="905.00" y="671.00" width="8.00" height="21.00" fill="#121212" />
<rect x="894.00" y="664.00" width="11.00" height="17.00" fill="#181818" />
<rect x="875.00" y="664.00" width="4.00" height="26.00" fill="#2a2a2a" />
<rect x="917.00" y="685.00" width="6.00" height="15.00" fill="#2a2a2a" />
<rect x="923.30" y="633.30" width="8.70" height="140.70" fill="#080808" />
<rect x="926.50" y="640.00" width="3.50" height="50.00" fill="#151515" />
<rect x="926.50" y="700.00" width="3.50" height="68.00" fill="#131313" />
<rect x="932.20" y="636.00" width="10.70" height="32.00" fill="#1b1b1b" />
<rect x="932.20" y="680.00" width="10.70" height="72.00" fill="#1a1a1a" />
<rect x="935.00" y="640.00" width="4.00" height="110.00" fill="#222222" opacity="0.6"/>
<rect x="875.30" y="701.70" width="48.00" height="72.30" fill="#0f0f0f" rx="6"/>
<ellipse cx="898" cy="720.0" rx="20.9" ry="14.7" fill="#0b0b0b" stroke="#222222" stroke-width="1.2"/>
<ellipse cx="898" cy="720.0" rx="17.5" ry="11.6" fill="none" stroke="#171717" stroke-width="1"/>
<ellipse cx="898" cy="755.0" rx="20.9" ry="14.7" fill="#0b0b0b" stroke="#222222" stroke-width="1.2"/>
<ellipse cx="898" cy="755.0" rx="17.5" ry="11.6" fill="none" stroke="#171717" stroke-width="1"/>
<circle cx="917.60" cy="736.70" r="3.20" fill="#363636" />
</svg>
<div class="a" style="left:1193.0px;top:48.5px;width:307.0px;height:10.0px;background:#454545;"></div>
<div class="a" style="left:1193.0px;top:48.5px;width:29.0px;height:10.0px;background:#454545;"></div>
<div class="a" style="left:1193.0px;top:58.5px;width:29.0px;height:753.5px;background:#535353;"></div>
<div class="a" style="left:1193.0px;top:89.5px;width:29.0px;height:1.5px;background:#3e3e3e;"></div>
<div class="a" style="left:1222.0px;top:58.5px;width:2.0px;height:753.5px;background:#404040;"></div>
<svg style="left:1211px;top:51.500px" width="7" height="5"><path d="M2.800 0.300L0.400 2.500L2.800 4.700ZM6.200 0.300L3.800 2.500L6.200 4.700Z" fill="#d8d8d8"/></svg>
<div class="a" style="left:1200px;top:61px;width:15px;height:3px;background:repeating-linear-gradient(90deg,#454545 0 1px,transparent 1px 2px)"></div>
<svg style="left:1202px;top:69px" width="14" height="16" viewBox="0 0 14 16"><rect x="0.800" y="0.800" width="3.400" height="3.400" fill="none" stroke="#dadada" stroke-width="0.900"/><rect x="0.800" y="5.800" width="3.400" height="3.400" fill="none" stroke="#dadada" stroke-width="0.900"/><rect x="0.500" y="10.500" width="4" height="4" fill="#dadada"/><path d="M7 3.500C10 1.500 12.500 4 11.500 7.500C11 9.500 9.500 11.500 7.500 12C9.500 10 10 7 9 5.500L7.800 7Z" fill="#dadada"/></svg>
<div class="a" style="left:1224.0px;top:48.5px;width:222.0px;height:10.0px;background:#454545;"></div>
<svg style="left:1436px;top:51.500px" width="7" height="5"><path d="M0.300 0.300L2.700 2.500L0.300 4.700ZM3.700 0.300L6.100 2.500L3.700 4.700Z" fill="#d8d8d8"/></svg>
<div class="a" style="left:1446.0px;top:58.5px;width:2.5px;height:753.5px;background:#404040;"></div>
<div class="a" style="left:1498.8px;top:22.0px;width:1.2px;height:790.0px;background:#444444;"></div>
<div class="a" style="left:1448.5px;top:48.5px;width:51.5px;height:10.0px;background:#454545;"></div>
<div class="a" style="left:1448.5px;top:58.5px;width:51.5px;height:753.5px;background:#535353;"></div>
<div class="a" style="left:1448.5px;top:89.5px;width:51.5px;height:1.5px;background:#3e3e3e;"></div>
<svg style="left:1489px;top:51.500px" width="7" height="5"><path d="M2.800 0.300L0.400 2.500L2.800 4.700ZM6.200 0.300L3.800 2.500L6.200 4.700Z" fill="#d8d8d8"/></svg>
<div class="a" style="left:1456px;top:61px;width:15px;height:3px;background:repeating-linear-gradient(90deg,#454545 0 1px,transparent 1px 2px)"></div>
<svg style="left:1455px;top:70px" width="18" height="14" viewBox="0 0 18 14"><path d="M5.500 12.500C2.500 12.500 0.800 10.500 0.800 8.300C0.800 6.300 2.200 4.800 4 4.500C4.800 2.500 6.800 1.200 9 1.200C11.500 1.200 13.500 2.800 14 5C16 5.300 17.200 6.800 17.200 8.700C17.200 10.800 15.500 12.500 13.300 12.500Z" fill="none" stroke="#c8c8c8" stroke-width="1.400"/><path d="M6 9.500C4.500 9.500 4 8.500 4 7.800C4 6.500 5.500 5.500 7 6.500L11 9.500C12.500 10.500 14 9.500 14 8.300C14 7.300 13 6.500 12 6.500" fill="none" stroke="#c8c8c8" stroke-width="1.300"/></svg>
<div class="a" style="left:1224.0px;top:58.5px;width:222.0px;height:21.5px;background:#424242;"></div>
<div class="a" style="left:1259.0px;top:58.5px;width:33.0px;height:22.0px;background:#535353;"></div>
<div class="a" style="left:1258.0px;top:58.5px;width:1.0px;height:21.5px;background:#404040;"></div>
<div class="a" style="left:1292.0px;top:58.5px;width:1.0px;height:21.5px;background:#404040;"></div>
<div class="t dim" style="left:1232.0px;top:64.2px;font-size:9.7px;letter-spacing:-0.387px;">颜色</div>
<div class="t " style="left:1266.0px;top:64.2px;color:#f0f0f0;font-size:9.7px;letter-spacing:-0.037px;">色板</div>
<svg style="left:1433.6px;top:66.7px" width="8" height="6"><path d="M0 0.700H8M0 3H8M0 5.300H8" stroke="#cacaca" stroke-width="1.300"/></svg>
<div class="a" style="left:1224.0px;top:80.0px;width:222.0px;height:228.5px;background:#535353;"></div>
<div class="a" style="left:1224.0px;top:85.5px;width:222.0px;height:16.5px;background:#4d4d4d;"></div>
<div class="a" style="left:1227.5px;top:87.0px;width:202.0px;height:14.0px;background:#454545;"></div>
<div class="a" style="left:1228.6px;top:88.0px;width:11.8px;height:12.0px;background:#000000;"></div>
<div class="a" style="left:1241.1px;top:88.0px;width:11.8px;height:12.0px;background:#000000;"></div>
<div class="a" style="left:1253.6px;top:88.0px;width:11.8px;height:12.0px;background:#ffffff;"></div>
<div class="a" style="left:1266.0px;top:88.0px;width:11.8px;height:12.0px;background:#ffffff;"></div>
<div class="a" style="left:1278.5px;top:88.0px;width:11.8px;height:12.0px;background:#6d6d6d;"></div>
<div class="a" style="left:1291.0px;top:88.0px;width:11.8px;height:12.0px;background:#b0b0b0;"></div>
<div class="a" style="left:1303.5px;top:88.0px;width:11.8px;height:12.0px;background:#1d1b5e;"></div>
<div class="a" style="left:1316.0px;top:88.0px;width:11.8px;height:12.0px;background:#005a32;"></div>
<div class="a" style="left:1328.4px;top:88.0px;width:11.8px;height:12.0px;background:#f8e0b8;"></div>
<div class="a" style="left:1340.9px;top:88.0px;width:11.8px;height:12.0px;background:#ffffff;"></div>
<div class="a" style="left:1353.4px;top:88.0px;width:11.8px;height:12.0px;background:#0a4595;"></div>
<div class="a" style="left:1365.9px;top:88.0px;width:11.8px;height:12.0px;background:#ff9900;"></div>
<div class="a" style="left:1378.4px;top:88.0px;width:11.8px;height:12.0px;background:#1d1b5e;"></div>
<div class="a" style="left:1390.8px;top:88.0px;width:11.8px;height:12.0px;background:#1d1b5e;"></div>
<div class="a" style="left:1403.3px;top:88.0px;width:11.8px;height:12.0px;background:#ffffff;"></div>
<div class="a" style="left:1415.8px;top:88.0px;width:11.8px;height:12.0px;background:#c8a0f8;"></div>
<div class="a" style="left:1224.0px;top:104.0px;width:222.0px;height:185.0px;background:#4e4e4e;"></div>
<div class="a" style="left:1433.4px;top:104.0px;width:12.6px;height:185.0px;background:#494949;"></div>
<div class="a" style="left:1224.0px;top:104.7px;width:13.3px;height:13.3px;background:#ff0000;"></div>
<div class="a" style="left:1238.0px;top:104.7px;width:13.3px;height:13.3px;background:#ffff00;"></div>
<div class="a" style="left:1252.0px;top:104.7px;width:13.3px;height:13.3px;background:#00ff00;"></div>
<div class="a" style="left:1266.1px;top:104.7px;width:13.3px;height:13.3px;background:#00ffff;"></div>
<div class="a" style="left:1280.1px;top:104.7px;width:13.3px;height:13.3px;background:#0000ff;"></div>
<div class="a" style="left:1294.1px;top:104.7px;width:13.3px;height:13.3px;background:#ff00ff;"></div>
<div class="a" style="left:1308.1px;top:104.7px;width:13.3px;height:13.3px;background:#ffffff;"></div>
<div class="a" style="left:1322.1px;top:104.7px;width:13.3px;height:13.3px;background:#ebebeb;"></div>
<div class="a" style="left:1336.2px;top:104.7px;width:13.3px;height:13.3px;background:#e1e1e1;"></div>
<div class="a" style="left:1350.2px;top:104.7px;width:13.3px;height:13.3px;background:#dcdcdc;"></div>
<div class="a" style="left:1364.2px;top:104.7px;width:13.3px;height:13.3px;background:#d7d7d7;"></div>
<div class="a" style="left:1378.2px;top:104.7px;width:13.3px;height:13.3px;background:#cdcdcd;"></div>
<div class="a" style="left:1392.2px;top:104.7px;width:13.3px;height:13.3px;background:#c3c3c3;"></div>
<div class="a" style="left:1406.3px;top:104.7px;width:13.3px;height:13.3px;background:#b9b9b9;"></div>
<div class="a" style="left:1224.0px;top:118.7px;width:13.3px;height:13.3px;background:#afafaf;"></div>
<div class="a" style="left:1238.0px;top:118.7px;width:13.3px;height:13.3px;background:#a5a5a5;"></div>
<div class="a" style="left:1252.0px;top:118.7px;width:13.3px;height:13.3px;background:#e60012;"></div>
<div class="a" style="left:1266.1px;top:118.7px;width:13.3px;height:13.3px;background:#fff100;"></div>
<div class="a" style="left:1280.1px;top:118.7px;width:13.3px;height:13.3px;background:#009944;"></div>
<div class="a" style="left:1294.1px;top:118.7px;width:13.3px;height:13.3px;background:#00a0e9;"></div>
<div class="a" style="left:1308.1px;top:118.7px;width:13.3px;height:13.3px;background:#1d2088;"></div>
<div class="a" style="left:1322.1px;top:118.7px;width:13.3px;height:13.3px;background:#e4007f;"></div>
<div class="a" style="left:1336.2px;top:118.7px;width:13.3px;height:13.3px;background:#9b9b9b;"></div>
<div class="a" style="left:1350.2px;top:118.7px;width:13.3px;height:13.3px;background:#8c8c8c;"></div>
<div class="a" style="left:1364.2px;top:118.7px;width:13.3px;height:13.3px;background:#7d7d7d;"></div>
<div class="a" style="left:1378.2px;top:118.7px;width:13.3px;height:13.3px;background:#6e6e6e;"></div>
<div class="a" style="left:1392.2px;top:118.7px;width:13.3px;height:13.3px;background:#646464;"></div>
<div class="a" style="left:1406.3px;top:118.7px;width:13.3px;height:13.3px;background:#555555;"></div>
<div class="a" style="left:1224.0px;top:132.7px;width:13.3px;height:13.3px;background:#464646;"></div>
<div class="a" style="left:1238.0px;top:132.7px;width:13.3px;height:13.3px;background:#323232;"></div>
<div class="a" style="left:1252.0px;top:132.7px;width:13.3px;height:13.3px;background:#1e1e1e;"></div>
<div class="a" style="left:1266.1px;top:132.7px;width:13.3px;height:13.3px;background:#000000;"></div>
<div class="a" style="left:1280.1px;top:132.7px;width:13.3px;height:13.3px;background:#f29c76;"></div>
<div class="a" style="left:1294.1px;top:132.7px;width:13.3px;height:13.3px;background:#f6b37f;"></div>
<div class="a" style="left:1308.1px;top:132.7px;width:13.3px;height:13.3px;background:#facd89;"></div>
<div class="a" style="left:1322.1px;top:132.7px;width:13.3px;height:13.3px;background:#fff799;"></div>
<div class="a" style="left:1336.2px;top:132.7px;width:13.3px;height:13.3px;background:#cce198;"></div>
<div class="a" style="left:1350.2px;top:132.7px;width:13.3px;height:13.3px;background:#acd598;"></div>
<div class="a" style="left:1364.2px;top:132.7px;width:13.3px;height:13.3px;background:#89c997;"></div>
<div class="a" style="left:1378.2px;top:132.7px;width:13.3px;height:13.3px;background:#84ccc9;"></div>
<div class="a" style="left:1392.2px;top:132.7px;width:13.3px;height:13.3px;background:#7ecef4;"></div>
<div class="a" style="left:1406.3px;top:132.7px;width:13.3px;height:13.3px;background:#88abda;"></div>
<div class="a" style="left:1224.0px;top:146.8px;width:13.3px;height:13.3px;background:#8c97cb;"></div>
<div class="a" style="left:1238.0px;top:146.8px;width:13.3px;height:13.3px;background:#8f82bc;"></div>
<div class="a" style="left:1252.0px;top:146.8px;width:13.3px;height:13.3px;background:#aa89bd;"></div>
<div class="a" style="left:1266.1px;top:146.8px;width:13.3px;height:13.3px;background:#c490bf;"></div>
<div class="a" style="left:1280.1px;top:146.8px;width:13.3px;height:13.3px;background:#f19ec2;"></div>
<div class="a" style="left:1294.1px;top:146.8px;width:13.3px;height:13.3px;background:#f29c9f;"></div>
<div class="a" style="left:1308.1px;top:146.8px;width:13.3px;height:13.3px;background:#ec6941;"></div>
<div class="a" style="left:1322.1px;top:146.8px;width:13.3px;height:13.3px;background:#f19149;"></div>
<div class="a" style="left:1336.2px;top:146.8px;width:13.3px;height:13.3px;background:#f8b551;"></div>
<div class="a" style="left:1350.2px;top:146.8px;width:13.3px;height:13.3px;background:#fff45c;"></div>
<div class="a" style="left:1364.2px;top:146.8px;width:13.3px;height:13.3px;background:#b3d465;"></div>
<div class="a" style="left:1378.2px;top:146.8px;width:13.3px;height:13.3px;background:#80c269;"></div>
<div class="a" style="left:1392.2px;top:146.8px;width:13.3px;height:13.3px;background:#32b16c;"></div>
<div class="a" style="left:1406.3px;top:146.8px;width:13.3px;height:13.3px;background:#13b5b1;"></div>
<div class="a" style="left:1224.0px;top:160.8px;width:13.3px;height:13.3px;background:#00b7ee;"></div>
<div class="a" style="left:1238.0px;top:160.8px;width:13.3px;height:13.3px;background:#448aca;"></div>
<div class="a" style="left:1252.0px;top:160.8px;width:13.3px;height:13.3px;background:#556fb5;"></div>
<div class="a" style="left:1266.1px;top:160.8px;width:13.3px;height:13.3px;background:#5f52a0;"></div>
<div class="a" style="left:1280.1px;top:160.8px;width:13.3px;height:13.3px;background:#8957a1;"></div>
<div class="a" style="left:1294.1px;top:160.8px;width:13.3px;height:13.3px;background:#ae5da1;"></div>
<div class="a" style="left:1308.1px;top:160.8px;width:13.3px;height:13.3px;background:#ea68a2;"></div>
<div class="a" style="left:1322.1px;top:160.8px;width:13.3px;height:13.3px;background:#eb6877;"></div>
<div class="a" style="left:1336.2px;top:160.8px;width:13.3px;height:13.3px;background:#e60012;"></div>
<div class="a" style="left:1350.2px;top:160.8px;width:13.3px;height:13.3px;background:#eb6100;"></div>
<div class="a" style="left:1364.2px;top:160.8px;width:13.3px;height:13.3px;background:#f39800;"></div>
<div class="a" style="left:1378.2px;top:160.8px;width:13.3px;height:13.3px;background:#fff100;"></div>
<div class="a" style="left:1392.2px;top:160.8px;width:13.3px;height:13.3px;background:#8fc31f;"></div>
<div class="a" style="left:1406.3px;top:160.8px;width:13.3px;height:13.3px;background:#22ac38;"></div>
<div class="a" style="left:1224.0px;top:174.8px;width:13.3px;height:13.3px;background:#009944;"></div>
<div class="a" style="left:1238.0px;top:174.8px;width:13.3px;height:13.3px;background:#009e96;"></div>
<div class="a" style="left:1252.0px;top:174.8px;width:13.3px;height:13.3px;background:#00a0e9;"></div>
<div class="a" style="left:1266.1px;top:174.8px;width:13.3px;height:13.3px;background:#0068b7;"></div>
<div class="a" style="left:1280.1px;top:174.8px;width:13.3px;height:13.3px;background:#00479d;"></div>
<div class="a" style="left:1294.1px;top:174.8px;width:13.3px;height:13.3px;background:#1d2088;"></div>
<div class="a" style="left:1308.1px;top:174.8px;width:13.3px;height:13.3px;background:#601986;"></div>
<div class="a" style="left:1322.1px;top:174.8px;width:13.3px;height:13.3px;background:#920783;"></div>
<div class="a" style="left:1336.2px;top:174.8px;width:13.3px;height:13.3px;background:#e4007f;"></div>
<div class="a" style="left:1350.2px;top:174.8px;width:13.3px;height:13.3px;background:#e5004f;"></div>
<div class="a" style="left:1364.2px;top:174.8px;width:13.3px;height:13.3px;background:#a40000;"></div>
<div class="a" style="left:1378.2px;top:174.8px;width:13.3px;height:13.3px;background:#a84200;"></div>
<div class="a" style="left:1392.2px;top:174.8px;width:13.3px;height:13.3px;background:#ac6a00;"></div>
<div class="a" style="left:1406.3px;top:174.8px;width:13.3px;height:13.3px;background:#b7aa00;"></div>
<div class="a" style="left:1224.0px;top:188.8px;width:13.3px;height:13.3px;background:#638c0b;"></div>
<div class="a" style="left:1238.0px;top:188.8px;width:13.3px;height:13.3px;background:#097c25;"></div>
<div class="a" style="left:1252.0px;top:188.8px;width:13.3px;height:13.3px;background:#007130;"></div>
<div class="a" style="left:1266.1px;top:188.8px;width:13.3px;height:13.3px;background:#00736d;"></div>
<div class="a" style="left:1280.1px;top:188.8px;width:13.3px;height:13.3px;background:#0075a9;"></div>
<div class="a" style="left:1294.1px;top:188.8px;width:13.3px;height:13.3px;background:#004986;"></div>
<div class="a" style="left:1308.1px;top:188.8px;width:13.3px;height:13.3px;background:#002e73;"></div>
<div class="a" style="left:1322.1px;top:188.8px;width:13.3px;height:13.3px;background:#100964;"></div>
<div class="a" style="left:1336.2px;top:188.8px;width:13.3px;height:13.3px;background:#440062;"></div>
<div class="a" style="left:1350.2px;top:188.8px;width:13.3px;height:13.3px;background:#6a005f;"></div>
<div class="a" style="left:1364.2px;top:188.8px;width:13.3px;height:13.3px;background:#a4005b;"></div>
<div class="a" style="left:1378.2px;top:188.8px;width:13.3px;height:13.3px;background:#a40035;"></div>
<div class="a" style="left:1392.2px;top:188.8px;width:13.3px;height:13.3px;background:#7d0000;"></div>
<div class="a" style="left:1406.3px;top:188.8px;width:13.3px;height:13.3px;background:#7f2d00;"></div>
<div class="a" style="left:1224.0px;top:202.8px;width:13.3px;height:13.3px;background:#834e00;"></div>
<div class="a" style="left:1238.0px;top:202.8px;width:13.3px;height:13.3px;background:#8a8000;"></div>
<div class="a" style="left:1252.0px;top:202.8px;width:13.3px;height:13.3px;background:#3d6d0b;"></div>
<div class="a" style="left:1266.1px;top:202.8px;width:13.3px;height:13.3px;background:#005e15;"></div>
<div class="a" style="left:1280.1px;top:202.8px;width:13.3px;height:13.3px;background:#005826;"></div>
<div class="a" style="left:1294.1px;top:202.8px;width:13.3px;height:13.3px;background:#005952;"></div>
<div class="a" style="left:1308.1px;top:202.8px;width:13.3px;height:13.3px;background:#005982;"></div>
<div class="a" style="left:1322.1px;top:202.8px;width:13.3px;height:13.3px;background:#003567;"></div>
<div class="a" style="left:1336.2px;top:202.8px;width:13.3px;height:13.3px;background:#001c58;"></div>
<div class="a" style="left:1350.2px;top:202.8px;width:13.3px;height:13.3px;background:#03004c;"></div>
<div class="a" style="left:1364.2px;top:202.8px;width:13.3px;height:13.3px;background:#32004b;"></div>
<div class="a" style="left:1378.2px;top:202.8px;width:13.3px;height:13.3px;background:#500047;"></div>
<div class="a" style="left:1392.2px;top:202.8px;width:13.3px;height:13.3px;background:#7e0043;"></div>
<div class="a" style="left:1406.3px;top:202.8px;width:13.3px;height:13.3px;background:#7d0022;"></div>
<div class="a" style="left:1224.0px;top:216.9px;width:13.3px;height:13.3px;background:#d9c5a5;"></div>
<div class="a" style="left:1238.0px;top:216.9px;width:13.3px;height:13.3px;background:#ac9880;"></div>
<div class="a" style="left:1252.0px;top:216.9px;width:13.3px;height:13.3px;background:#7d6a58;"></div>
<div class="a" style="left:1266.1px;top:216.9px;width:13.3px;height:13.3px;background:#594a42;"></div>
<div class="a" style="left:1280.1px;top:216.9px;width:13.3px;height:13.3px;background:#362e2b;"></div>
<div class="a" style="left:1294.1px;top:216.9px;width:13.3px;height:13.3px;background:#d4ab76;"></div>
<div class="a" style="left:1308.1px;top:216.9px;width:13.3px;height:13.3px;background:#b28850;"></div>
<div class="a" style="left:1322.1px;top:216.9px;width:13.3px;height:13.3px;background:#96682f;"></div>
<div class="a" style="left:1336.2px;top:216.9px;width:13.3px;height:13.3px;background:#7b4f1d;"></div>
<div class="a" style="left:1350.2px;top:216.9px;width:13.3px;height:13.3px;background:#603813;"></div>
<div class="a" style="left:1224.0px;top:288.8px;width:222.0px;height:1.0px;background:#444;"></div>
<svg style="left:1392.5px;top:293.8px" width="10" height="10"><path d="M1 1H9V9H4L1 6Z M1 6H4V9" fill="none" stroke="#dadada" stroke-width="1.200"/></svg>
<svg style="left:1414.2px;top:293.3px" width="9" height="11"><path d="M0.500 2.500H8.500M3 2.500V1H6V2.500M1.500 2.500V10H7.500V2.500M3.500 4V8.500M5.500 4V8.500" fill="none" stroke="#9a9a9a" stroke-width="1"/></svg>
<div class="a" style="left:1224.0px;top:308.0px;width:222.0px;height:3.0px;background:#404040;"></div>
<div class="a" style="left:1224.0px;top:311.0px;width:222.0px;height:21.4px;background:#424242;"></div>
<div class="a" style="left:1224.0px;top:311.0px;width:34.6px;height:22.0px;background:#535353;"></div>
<div class="a" style="left:1258.6px;top:311.0px;width:1.0px;height:21.4px;background:#404040;"></div>
<div class="a" style="left:1293.4px;top:311.0px;width:1.0px;height:21.4px;background:#404040;"></div>
<div class="t " style="left:1232.0px;top:315.8px;color:#f0f0f0;font-size:9.7px;letter-spacing:-0.088px;">属性</div>
<div class="t dim" style="left:1266.9px;top:315.8px;font-size:9.7px;letter-spacing:-0.137px;">调整</div>
<svg style="left:1433.6px;top:319.2px" width="8" height="6"><path d="M0 0.700H8M0 3H8M0 5.300H8" stroke="#cacaca" stroke-width="1.300"/></svg>
<div class="a" style="left:1224.0px;top:332.4px;width:222.0px;height:228.1px;background:#535353;"></div>
<div class="a" style="left:1224.0px;top:358.5px;width:222.0px;height:1.0px;background:#474747;"></div>
<div class="a" style="left:1233px;top:338px;width:16.500px;height:16.500px;background:#3e3e3e;border:1px solid #333;border-radius:2px"></div>
<svg style="left:1236px;top:342px" width="11" height="9"><rect x="0.500" y="0.500" width="10" height="8" fill="none" stroke="#e0e0e0" stroke-width="1"/><path d="M1.500 7.500L4 4L5.800 6L7.300 4.800L9.500 7.500Z" fill="#e0e0e0"/></svg>
<div class="t " style="left:1255.6px;top:340.8px;color:#e6e6e6;letter-spacing:-0.711px;">像素图层属性</div>
<div class="a" style="left:1434.6px;top:359.5px;width:11.4px;height:181.5px;background:#5a5a5a;"></div>
<div class="t " style="left:1233.0px;top:369.2px;color:#c4c4c4;letter-spacing:-0.481px;"><span class="l">W:</span></div>
<div class="inp" style="left:1248.6px;top:367.2px;width:48.1px;height:14.1px;border-radius:1px"></div>
<div class="t " style="left:1250.3px;top:369.4px;letter-spacing:-0.439px;"><span class="l">144.5</span> 厘米</div>
<div class="a" style="left:1303.300px;top:365.300px;width:18.700px;height:18.500px;background:#3a3a3a;border:1px solid #333;border-radius:2px"></div>
<svg style="left:1307.500px;top:371.500px" width="11" height="6"><circle cx="3" cy="3" r="2.200" fill="none" stroke="#c8c8c8" stroke-width="1.100"/><circle cx="8" cy="3" r="2.200" fill="none" stroke="#c8c8c8" stroke-width="1.100"/></svg>
<div class="t " style="left:1331.5px;top:369.2px;color:#c4c4c4;letter-spacing:-0.247px;"><span class="l">H:</span></div>
<div class="inp" style="left:1344.8px;top:367.2px;width:47.4px;height:14.1px;border-radius:1px"></div>
<div class="t " style="left:1346.4px;top:369.4px;letter-spacing:-0.514px;"><span class="l">144.5</span> 厘米</div>
<div class="t " style="left:1237.0px;top:390.0px;color:#c4c4c4;letter-spacing:-1.239px;"><span class="l">X:</span></div>
<div class="inp" style="left:1248.6px;top:388.7px;width:48.1px;height:13.8px;border-radius:1px"></div>
<div class="t " style="left:1249.6px;top:390.2px;letter-spacing:-0.336px;"><span class="l">0</span> 厘米</div>
<div class="t " style="left:1332.5px;top:390.0px;color:#c4c4c4;letter-spacing:-0.223px;"><span class="l">Y:</span></div>
<div class="inp" style="left:1344.8px;top:388.7px;width:47.4px;height:13.8px;border-radius:1px"></div>
<div class="t " style="left:1344.8px;top:390.2px;letter-spacing:-0.361px;"><span class="l">0</span> 厘米</div>
<div class="a" style="left:1224.0px;top:560.5px;width:222.0px;height:2.8px;background:#404040;"></div>
<div class="a" style="left:1224.0px;top:563.3px;width:222.0px;height:21.5px;background:#424242;"></div>
<div class="a" style="left:1224.0px;top:563.3px;width:34.6px;height:22.2px;background:#535353;"></div>
<div class="a" style="left:1258.6px;top:563.3px;width:1.0px;height:21.5px;background:#404040;"></div>
<div class="a" style="left:1293.4px;top:563.3px;width:1.0px;height:21.5px;background:#404040;"></div>
<div class="a" style="left:1328.2px;top:563.3px;width:1.0px;height:21.5px;background:#404040;"></div>
<div class="t " style="left:1232.0px;top:568.0px;color:#f0f0f0;font-size:9.7px;letter-spacing:-0.187px;">图层</div>
<div class="t dim" style="left:1266.0px;top:568.0px;font-size:9.7px;letter-spacing:-0.037px;">通道</div>
<div class="t dim" style="left:1301.3px;top:568.0px;font-size:9.7px;letter-spacing:-0.037px;">路径</div>
<svg style="left:1433.6px;top:571.7px" width="8" height="6"><path d="M0 0.700H8M0 3H8M0 5.300H8" stroke="#cacaca" stroke-width="1.300"/></svg>
<div class="a" style="left:1224.0px;top:584.8px;width:222.0px;height:227.2px;background:#535353;"></div>
<div class="inp" style="left:1227.7px;top:591.9px;width:66.7px;height:14.0px;"></div>
<svg style="left:1233px;top:594.500px" width="9" height="9"><circle cx="5.500" cy="3.500" r="2.600" fill="none" stroke="#d8d8d8" stroke-width="1.100"/><path d="M3.600 5.400L0.800 8.200" stroke="#d8d8d8" stroke-width="1.300"/></svg>
<div class="t " style="left:1245.3px;top:593.4px;letter-spacing:-0.933px;">类型</div>
<svg style="left:1286.5px;top:597.5px" width="6" height="4"><path d="M0.5 0.5 L3.0 3.0 L5.5 0.5" fill="none" stroke="#b0b0b0" stroke-width="1.1"/></svg>
<svg style="left:1306.500px;top:594.500px" width="11" height="9"><rect x="0.500" y="0.500" width="10" height="8" fill="none" stroke="#e0e0e0" stroke-width="1"/><path d="M1.500 7.500L4 4L5.800 6L7.300 4.800L9.500 7.500Z" fill="#e0e0e0"/></svg>
<svg style="left:1326px;top:594px" width="10" height="10"><circle cx="5" cy="5" r="4.200" fill="none" stroke="#e0e0e0" stroke-width="1"/><path d="M2 8A4.200 4.200 0 0 1 8 2Z" fill="#e0e0e0"/></svg>
<div class="t" style="left:1345px;top:592.500px;font-family:'Liberation Serif',serif;font-weight:bold;font-size:12.500px;line-height:13px;color:#e0e0e0">T</div>
<svg style="left:1363.500px;top:594px" width="10" height="10"><rect x="1.500" y="1.500" width="7" height="7" fill="none" stroke="#e0e0e0" stroke-width="1"/><rect x="0" y="0" width="3" height="3" fill="#e0e0e0"/><rect x="7" y="0" width="3" height="3" fill="#e0e0e0"/><rect x="0" y="7" width="3" height="3" fill="#e0e0e0"/><rect x="7" y="7" width="3" height="3" fill="#e0e0e0"/></svg>
<svg style="left:1382.500px;top:593.500px" width="10" height="11"><path d="M3 0.500H7L9.500 3V8.500H5.500" fill="none" stroke="#e0e0e0" stroke-width="1"/><rect x="0.500" y="5.500" width="5" height="5" fill="#e0e0e0"/><path d="M1.700 5.500V4A1.300 1.300 0 0 1 4.300 4V5.500" fill="none" stroke="#e0e0e0" stroke-width="0.900"/></svg>
<div class="a" style="left:1405px;top:592.500px;width:7.600px;height:14px;border-radius:4px;background:#484848;border:1px solid #404040"></div>
<div class="a" style="left:1405.500px;top:592px;width:6.600px;height:6.600px;border-radius:50%;background:#e4e4e4"></div>
<div class="a" style="left:1224.0px;top:609.7px;width:222.0px;height:1.0px;background:#474747;"></div>
<div class="inp" style="left:1227.7px;top:612.9px;width:90.5px;height:14.3px;"></div>
<div class="t " style="left:1234.1px;top:614.8px;letter-spacing:-0.683px;">正常</div>
<svg style="left:1310.5px;top:619.0px" width="6" height="4"><path d="M0.5 0.5 L3.0 3.0 L5.5 0.5" fill="none" stroke="#b0b0b0" stroke-width="1.1"/></svg>
<div class="t " style="left:1325.8px;top:614.8px;letter-spacing:-0.477px;">不透明度<span class="l">:</span></div>
<div class="inp" style="left:1370.0px;top:612.9px;width:41.7px;height:14.3px;"></div>
<div class="a" style="left:1399.0px;top:613.7px;width:1.0px;height:12.8px;background:#404040;"></div>
<div class="t " style="left:1371.8px;top:614.8px;letter-spacing:-0.612px;"><span class="l">100%</span></div>
<svg style="left:1402.5px;top:619.0px" width="6" height="4"><path d="M0.5 0.5 L3.0 3.0 L5.5 0.5" fill="none" stroke="#b0b0b0" stroke-width="1.1"/></svg>
<div class="a" style="left:1224.0px;top:630.6px;width:222.0px;height:1.0px;background:#474747;"></div>
<div class="t " style="left:1229.5px;top:635.5px;letter-spacing:0.021px;">锁定<span class="l">:</span></div>
<svg style="left:1257.700px;top:637px" width="9" height="9"><rect x="0.500" y="0.500" width="8" height="8" fill="none" stroke="#e0e0e0" stroke-width="0.900"/><rect x="1" y="1" width="2.400" height="2.400" fill="#e0e0e0"/><rect x="5.600" y="1" width="2.400" height="2.400" fill="#e0e0e0"/><rect x="3.300" y="3.300" width="2.400" height="2.400" fill="#e0e0e0"/><rect x="1" y="5.600" width="2.400" height="2.400" fill="#e0e0e0"/><rect x="5.600" y="5.600" width="2.400" height="2.400" fill="#e0e0e0"/></svg>
<svg style="left:1275px;top:636.500px" width="10" height="10"><path d="M9.500 0.500L4.800 5.800L4 5Z M3.500 5.500C2 5.600 2 7 1.800 7.800C1.600 8.800 1 9.200 0.500 9.400C2.500 10 4.500 9 4.600 7C4.700 6.300 4.200 5.600 3.500 5.500Z" fill="#e0e0e0"/></svg>
<svg style="left:1292px;top:636.500px" width="10" height="10"><path d="M5 1V9M1 5H9" stroke="#e0e0e0" stroke-width="1"/><path d="M5 0L6.600 2H3.400ZM5 10L6.600 8H3.400ZM0 5L2 3.400V6.600ZM10 5L8 3.400V6.600Z" fill="#e0e0e0"/></svg>
<svg style="left:1309px;top:636.500px" width="11" height="10"><path d="M2.500 0V7.500H10.500M0 2.500H8V10" fill="none" stroke="#e0e0e0" stroke-width="1.100"/><path d="M7 1L9.500 3.500" stroke="#e0e0e0" stroke-width="0.900"/></svg>
<svg style="left:1327.500px;top:636px" width="9" height="11"><rect x="0.500" y="4.500" width="8" height="6" rx="0.800" fill="#e0e0e0"/><path d="M2.300 4.500V3A2.200 2.200 0 0 1 6.700 3V4.500" fill="none" stroke="#e0e0e0" stroke-width="1.200"/><rect x="4" y="6.500" width="1" height="2" fill="#535353"/></svg>
<div class="t " style="left:1344.5px;top:635.5px;letter-spacing:-0.446px;">填充<span class="l">:</span></div>
<div class="inp" style="left:1370.0px;top:634.0px;width:41.7px;height:14.3px;"></div>
<div class="a" style="left:1399.0px;top:634.8px;width:1.0px;height:12.8px;background:#404040;"></div>
<div class="t " style="left:1371.8px;top:635.5px;letter-spacing:-0.612px;"><span class="l">100%</span></div>
<svg style="left:1402.5px;top:640.0px" width="6" height="4"><path d="M0.5 0.5 L3.0 3.0 L5.5 0.5" fill="none" stroke="#b0b0b0" stroke-width="1.1"/></svg>
<div class="a" style="left:1224.0px;top:651.8px;width:222.0px;height:1.0px;background:#474747;"></div>
<div class="a" style="left:1224.0px;top:652.8px;width:222px;height:139.200px;overflow:hidden">
<div class="a" style="left:0;top:-12.4px;width:210.600px;height:30.5px;background:#535353;border-bottom:1px solid #474747"></div>
<svg style="left:6.4px;top:-1.2px" width="12" height="8" viewBox="0 0 12 8"><path d="M0.300 4Q6 -2.500 11.700 4Q6 10.500 0.300 4Z" fill="#e6e6e6"/><circle cx="6" cy="3.800" r="2.200" fill="#535353"/><circle cx="6" cy="3.800" r="1.100" fill="#e6e6e6"/></svg>
<div class="a" style="left:27.3px;top:-9.2px;width:24.500px;height:24px;border:1px solid #2e2e2e;background-color:#fff;background-image:linear-gradient(45deg,#ccc 25%,transparent 25%,transparent 75%,#ccc 75%),linear-gradient(45deg,#ccc 25%,transparent 25%,transparent 75%,#ccc 75%);background-size:6px 6px;background-position:0 0,3px 3px"></div>
<div class="a" style="left:37.3px;top:0.8px;width:14px;height:3px;background:#fff"></div>
<div class="a" style="left:41.3px;top:4.3px;width:10.500px;height:10.500px;background:#3a3a3a"></div>
<svg style="left:42.1px;top:5.1px" width="9" height="9"><rect x="1.500" y="1.500" width="6" height="6" fill="none" stroke="#e8e8e8" stroke-width="0.900"/><rect x="0" y="0" width="2.600" height="2.600" fill="#e8e8e8"/><rect x="6.400" y="0" width="2.600" height="2.600" fill="#e8e8e8"/><rect x="0" y="6.400" width="2.600" height="2.600" fill="#e8e8e8"/><rect x="6.400" y="6.400" width="2.600" height="2.600" fill="#e8e8e8"/></svg>
<div class="t " style="left:59.4px;top:-2.9px;color:#e8e8e8;letter-spacing:-0.086px;">矩形 <span class="l">3</span></div>
<div class="a" style="left:0;top:18.0px;width:210.600px;height:30.5px;background:#535353;border-bottom:1px solid #474747"></div>
<svg style="left:6.4px;top:29.2px" width="12" height="8" viewBox="0 0 12 8"><path d="M0.300 4Q6 -2.500 11.700 4Q6 10.500 0.300 4Z" fill="#e6e6e6"/><circle cx="6" cy="3.800" r="2.200" fill="#535353"/><circle cx="6" cy="3.800" r="1.100" fill="#e6e6e6"/></svg>
<div class="a" style="left:27.3px;top:21.2px;width:24.500px;height:24px;border:1px solid #2e2e2e;background-color:#fff;background-image:linear-gradient(45deg,#ccc 25%,transparent 25%,transparent 75%,#ccc 75%),linear-gradient(45deg,#ccc 25%,transparent 25%,transparent 75%,#ccc 75%);background-size:6px 6px;background-position:0 0,3px 3px"></div>
<div class="a" style="left:37.3px;top:31.2px;width:14px;height:3px;background:#fff"></div>
<div class="a" style="left:41.3px;top:34.7px;width:10.500px;height:10.500px;background:#3a3a3a"></div>
<svg style="left:42.1px;top:35.5px" width="9" height="9"><rect x="1.500" y="1.500" width="6" height="6" fill="none" stroke="#e8e8e8" stroke-width="0.900"/><rect x="0" y="0" width="2.600" height="2.600" fill="#e8e8e8"/><rect x="6.400" y="0" width="2.600" height="2.600" fill="#e8e8e8"/><rect x="0" y="6.400" width="2.600" height="2.600" fill="#e8e8e8"/><rect x="6.400" y="6.400" width="2.600" height="2.600" fill="#e8e8e8"/></svg>
<div class="t " style="left:59.4px;top:27.5px;color:#e8e8e8;letter-spacing:-0.086px;">矩形 <span class="l">2</span></div>
<div class="a" style="left:0;top:48.4px;width:210.600px;height:30.5px;background:#535353;border-bottom:1px solid #474747"></div>
<svg style="left:6.4px;top:59.6px" width="12" height="8" viewBox="0 0 12 8"><path d="M0.300 4Q6 -2.500 11.700 4Q6 10.500 0.300 4Z" fill="#e6e6e6"/><circle cx="6" cy="3.800" r="2.200" fill="#535353"/><circle cx="6" cy="3.800" r="1.100" fill="#e6e6e6"/></svg>
<div class="a" style="left:27.3px;top:51.6px;width:24.500px;height:24px;border:1px solid #2e2e2e;background-color:#fff;background-image:linear-gradient(45deg,#ccc 25%,transparent 25%,transparent 75%,#ccc 75%),linear-gradient(45deg,#ccc 25%,transparent 25%,transparent 75%,#ccc 75%);background-size:6px 6px;background-position:0 0,3px 3px"></div>
<div class="a" style="left:37.3px;top:61.6px;width:14px;height:3px;background:#fff"></div>
<div class="a" style="left:41.3px;top:65.1px;width:10.500px;height:10.500px;background:#3a3a3a"></div>
<svg style="left:42.1px;top:65.9px" width="9" height="9"><rect x="1.500" y="1.500" width="6" height="6" fill="none" stroke="#e8e8e8" stroke-width="0.900"/><rect x="0" y="0" width="2.600" height="2.600" fill="#e8e8e8"/><rect x="6.400" y="0" width="2.600" height="2.600" fill="#e8e8e8"/><rect x="0" y="6.400" width="2.600" height="2.600" fill="#e8e8e8"/><rect x="6.400" y="6.400" width="2.600" height="2.600" fill="#e8e8e8"/></svg>
<div class="t " style="left:59.4px;top:57.9px;color:#e8e8e8;letter-spacing:-0.086px;">矩形 <span class="l">1</span></div>
<div class="a" style="left:0;top:78.8px;width:210.600px;height:30.5px;background:#535353;border-bottom:1px solid #474747"></div>
<svg style="left:6.4px;top:90.0px" width="12" height="8" viewBox="0 0 12 8"><path d="M0.300 4Q6 -2.500 11.700 4Q6 10.500 0.300 4Z" fill="#e6e6e6"/><circle cx="6" cy="3.800" r="2.200" fill="#535353"/><circle cx="6" cy="3.800" r="1.100" fill="#e6e6e6"/></svg>
<div class="a" style="left:27.3px;top:82.0px;width:24.500px;height:24px;border:1px solid #2e2e2e;background-color:#fff;background-image:linear-gradient(45deg,#ccc 25%,transparent 25%,transparent 75%,#ccc 75%),linear-gradient(45deg,#ccc 25%,transparent 25%,transparent 75%,#ccc 75%);background-size:6px 6px;background-position:0 0,3px 3px"></div>
<div class="t " style="left:59.4px;top:88.3px;color:#e8e8e8;letter-spacing:-0.086px;">图层 <span class="l">2</span></div>
<div class="a" style="left:0;top:109.2px;width:210.600px;height:30.5px;background:#6b6b6b;border-bottom:1px solid #474747"></div>
<svg style="left:6.4px;top:120.4px" width="12" height="8" viewBox="0 0 12 8"><path d="M0.300 4Q6 -2.500 11.700 4Q6 10.500 0.300 4Z" fill="#e6e6e6"/><circle cx="6" cy="3.800" r="2.200" fill="#535353"/><circle cx="6" cy="3.800" r="1.100" fill="#e6e6e6"/></svg>
<div class="a" style="left:25.3px;top:110.4px;width:28.500px;height:28px;border:1px solid #f4f4f4"></div>
<div class="a" style="left:31.3px;top:109.4px;width:16.500px;height:30px;background:#6b6b6b"></div>
<div class="a" style="left:24.3px;top:116.4px;width:30.500px;height:16px;background:#6b6b6b"></div>
<svg style="left:27.3px;top:112.4px" width="24.500" height="24" viewBox="0 0 24 24" preserveAspectRatio="none"><rect width="24" height="24" fill="#000"/><rect x="0.100" y="0.200" width="19.400" height="4.450" fill="#fff"/><rect x="3.100" y="1.800" width="1.200" height="1.200" fill="#000"/><rect x="9.200" y="1.800" width="1.200" height="1.200" fill="#000"/><rect x="15.100" y="1.800" width="1.200" height="1.200" fill="#000"/><rect x="19.700" y="0.300" width="1.500" height="3" fill="#8a2a2a"/><rect x="21.300" y="0.400" width="2.600" height="1.700" fill="#4a4a20"/><rect x="21.200" y="2.600" width="2.800" height="0.900" fill="#6a6608"/><rect x="19.700" y="3.600" width="4.200" height="1" fill="#1c1c1c"/><rect x="0.100" y="4.900" width="23.800" height="0.300" fill="#fff"/><rect x="0.100" y="7.700" width="8.400" height="2.100" fill="#fff"/><rect x="11.100" y="7.700" width="6.100" height="2.100" fill="#fff"/><rect x="19.300" y="7.900" width="4.700" height="1.900" fill="#fff"/><rect x="4.800" y="8.200" width="2.100" height="1.600" fill="#000"/><rect x="14.300" y="8.200" width="2.100" height="1.600" fill="#000"/><rect x="0.200" y="10.100" width="18.800" height="0.300" fill="#fff"/><rect x="0.100" y="12.900" width="19" height="2" fill="#fff"/><rect x="19" y="10.100" width="4.800" height="4.600" fill="#fff"/><rect x="19.800" y="10.100" width="3.600" height="0.700" fill="#000"/><rect x="3.200" y="13.400" width="2.100" height="1.500" fill="#000"/><rect x="12.700" y="13.400" width="2.100" height="1.500" fill="#000"/><rect x="0" y="15" width="11.200" height="4" fill="#fff"/><rect x="1" y="15.200" width="9.300" height="3.600" fill="#dcdcdc"/><rect x="6" y="15.500" width="4" height="3" fill="#777"/><rect x="12.100" y="15" width="5.600" height="2.100" fill="#e8e8e8"/><rect x="12.300" y="17.400" width="5.200" height="1.500" fill="#8a7648"/><rect x="17.800" y="15" width="6.200" height="4" fill="#1c1c1c"/><rect x="0" y="19" width="7.800" height="5" fill="#dedede"/><rect x="0.800" y="20" width="1.600" height="3" fill="#444"/><rect x="7.900" y="19.100" width="1" height="4.800" fill="#8a8a90"/><rect x="13.800" y="19.100" width="3.200" height="4.900" fill="#1e1e1e"/><rect x="17.100" y="19" width="4.400" height="5" fill="#c4a200"/><rect x="20.100" y="22.400" width="1.400" height="1.600" fill="#080808"/><rect x="21.500" y="19" width="2.500" height="5" fill="#141414"/></svg>
<div class="t " style="left:59.4px;top:118.7px;color:#e8e8e8;letter-spacing:-0.086px;">图层 <span class="l">1</span></div>
<div class="a" style="left:24.0px;top:0;width:1px;height:139.200px;background:#474747"></div>
<div class="a" style="left:210.6px;top:0.0px;width:11.4px;height:139.2px;background:#4d4d4d;"></div>
<div class="a" style="left:211.6px;top:89.5px;width:9.4px;height:37.5px;background:#6e6e6e;"></div>
<svg style="left:213.3px;top:129.8px" width="6" height="4"><path d="M0.5 0.5 L3.0 3.0 L5.5 0.5" fill="none" stroke="#a0a0a0" stroke-width="1.1"/></svg>
<svg style="left:212.8px;top:5.2px" width="7" height="5"><path d="M0.500 4.500L3.500 1L6.500 4.500" fill="none" stroke="#a0a0a0" stroke-width="1.100"/></svg>
</div>
<div class="a" style="left:1224.0px;top:792.0px;width:222.0px;height:20.0px;background:#535353;"></div>
<div class="a" style="left:1224.0px;top:792.0px;width:222.0px;height:1.0px;background:#474747;"></div>
<svg style="left:1286.700px;top:798.5px" width="12" height="7"><rect x="0.600" y="0.600" width="6" height="5" rx="2.500" fill="none" stroke="#8a8a8a" stroke-width="1.100"/><rect x="5.400" y="0.600" width="6" height="5" rx="2.500" fill="none" stroke="#8a8a8a" stroke-width="1.100"/></svg>
<div class="t" style="left:1309px;top:794.5px;font-style:italic;font-size:11.500px;line-height:13px;height:13px;color:#e0e0e0;letter-spacing:-0.500px">fx</div>
<svg style="left:1329.800px;top:797.0px" width="11" height="9"><rect x="0" y="0" width="11" height="9" rx="0.800" fill="#e0e0e0"/><circle cx="5.500" cy="4.500" r="2.600" fill="#535353"/></svg>
<svg style="left:1351.400px;top:797.0px" width="10" height="10"><circle cx="5" cy="5" r="4.200" fill="none" stroke="#e0e0e0" stroke-width="1"/><path d="M2 8A4.200 4.200 0 0 1 8 2Z" fill="#e0e0e0"/></svg>
<svg style="left:1371.800px;top:797.0px" width="11" height="9"><path d="M0 1Q0 0 1 0H4L5 1.500H10Q11 1.500 11 2.500V8Q11 9 10 9H1Q0 9 0 8Z" fill="#e0e0e0"/></svg>
<svg style="left:1393.2px;top:797.0px" width="10" height="10"><path d="M1 1H9V9H4L1 6Z M1 6H4V9" fill="none" stroke="#dadada" stroke-width="1.200"/></svg>
<svg style="left:1414.2px;top:796.5px" width="9" height="11"><path d="M0.500 2.500H8.500M3 2.500V1H6V2.500M1.500 2.500V10H7.500V2.500M3.500 4V8.500M5.500 4V8.500" fill="none" stroke="#e0e0e0" stroke-width="1"/></svg>
<svg style="left:1319.0px;top:808.0px" width="3" height="2"><path d="M0 0H3L1.500 2Z" fill="#e0e0e0"/></svg>
<svg style="left:1361.5px;top:808.0px" width="3" height="2"><path d="M0 0H3L1.500 2Z" fill="#e0e0e0"/></svg>
<div class="a" style="left:0.0px;top:812.0px;width:1500.0px;height:32.0px;background:#04203c;"></div>
<svg style="left:12px;top:821.700px" width="13.300" height="13.300" viewBox="0 0 14 14"><path d="M0 2L5.800 1.200V6.600H0ZM6.600 1.100L14 0V6.600H6.600ZM0 7.400H5.800V12.800L0 12ZM6.600 7.400H14V14L6.600 12.900Z" fill="#fff"/></svg>
<svg style="left:49px;top:820px" width="16" height="16"><circle cx="9.800" cy="6" r="4.300" fill="none" stroke="#fff" stroke-width="1.300"/><path d="M6.800 9.200L1.200 14.800" stroke="#fff" stroke-width="1.300"/></svg>
<svg style="left:85.500px;top:817.500px" width="21" height="21" viewBox="0 0 21 21"><path d="M13.500 2.200A8.800 8.800 0 1 0 18.800 7.500" fill="none" stroke="#fff" stroke-width="2.200"/><circle cx="10.500" cy="10.500" r="3.600" fill="none" stroke="#fff" stroke-width="2"/><path d="M12.500 0L17.500 3.500L12 5.500Z" fill="#fff"/></svg>
<svg style="left:124.500px;top:818px" width="20" height="20" viewBox="0 0 20 20"><defs><radialGradient id="ffg" cx="0.650" cy="0.200" r="0.900"><stop offset="0" stop-color="#ffe94a"/><stop offset="0.450" stop-color="#ff8a16"/><stop offset="1" stop-color="#e31587"/></radialGradient></defs><circle cx="10" cy="11" r="8.500" fill="url(#ffg)"/><path d="M10 1C12 2 13 3 13.500 5C15 4.500 16 3 16 3C18 6 19 8 18.500 11L14 8L10 6.500Z" fill="#ffbd2e"/><circle cx="9.500" cy="11" r="4.300" fill="#6a2bd8"/><path d="M4 7C6 6.500 8 7 9 8.500C7.500 8.500 6.500 9.500 6.800 11C5.500 10 4.500 9 4 7Z" fill="#ff7a1a"/></svg>
<div class="a" style="left:119.0px;top:842.5px;width:26.0px;height:1.5px;background:#8fc3ee;"></div>
<div class="a" style="left:146.0px;top:842.5px;width:4.0px;height:1.5px;background:#6f9fc8;"></div>
<svg style="left:164px;top:819.500px" width="18" height="16" viewBox="0 0 18 16"><path d="M0.500 1.500H6L7.500 3H17.500V14.500H0.500Z" fill="#e8a918"/><rect x="0.500" y="4.500" width="17" height="10" fill="#ffd764"/><rect x="4" y="9" width="10" height="5.500" fill="#2f8fe0"/><rect x="6.500" y="11.500" width="5" height="3" fill="#ffd764"/></svg>
<div class="a" style="left:157.0px;top:842.5px;width:31.0px;height:1.5px;background:#8fc3ee;"></div>
<svg style="left:201px;top:819.500px" width="18" height="17" viewBox="0 0 18 17"><path d="M1 2.500L13 0.500V16.500L1 14.500Z" fill="#5b9fd0"/><path d="M13 0.500L17 2V15L13 16.500Z" fill="#3d7db0"/><circle cx="7.500" cy="8.500" r="4.600" fill="#f0832a"/><path d="M6 6L10.500 8.500L6 11Z" fill="#fff"/></svg>
<div class="a" style="left:240px;top:818.500px;width:19px;height:19px;border-radius:4px;background:linear-gradient(135deg,#19d25a,#0aa84a)"></div>
<div class="t" style="left:241.500px;top:821px;font-size:5.500px;line-height:6px;height:6px;color:#fff;font-weight:bold;letter-spacing:-0.200px">iQIYI</div>
<div class="t" style="left:242px;top:828px;font-size:5.500px;line-height:6px;height:6px;color:#fff;font-weight:bold">爱奇艺</div>
<div class="a" style="left:278px;top:818.500px;width:19px;height:19px;border-radius:4.500px;background:#fff"></div>
<svg style="left:281px;top:821px" width="14" height="14" viewBox="0 0 14 14"><path d="M2 1.500Q2 0.300 3.200 1L12.500 6Q13.500 7 12.500 8L3.200 13Q2 13.700 2 12.500Z" fill="#1fa0f0"/><path d="M2 5L9 8.500L2 12.500Z" fill="#7bd321"/><path d="M4.500 5.800L8 7.300L4.500 9.200Z" fill="#ff8f1f"/></svg>
<div class="a" style="left:315.500px;top:818.500px;width:19px;height:19px;border-radius:50%;background:#fff"></div>
<div class="a" style="left:317.500px;top:820.500px;width:15px;height:15px;border-radius:50%;background:#2f7df6"></div>
<div class="a" style="left:322px;top:824px;width:7px;height:7px;border-radius:50%;background:#fff"></div>
<div class="a" style="left:321px;top:828.500px;width:4.500px;height:4.500px;border-radius:50%;background:#2f7df6"></div>
<svg style="left:354px;top:818px" width="19" height="20" viewBox="0 0 19 20"><path d="M6 5V3.500Q6 1.500 9.500 1.500Q13 1.500 13 3.500V5" fill="none" stroke="#3aa0e8" stroke-width="1.400"/><path d="M1 5H18V17Q18 19 16 19H3Q1 19 1 17Z" fill="#f4f4f4"/><rect x="5.500" y="8.500" width="3.600" height="3.600" fill="#f25022"/><rect x="9.900" y="8.500" width="3.600" height="3.600" fill="#7fba00"/><rect x="5.500" y="12.900" width="3.600" height="3.600" fill="#00a4ef"/><rect x="9.900" y="12.900" width="3.600" height="3.600" fill="#ffb900"/></svg>
<div class="a" style="left:383.3px;top:812.0px;width:37.4px;height:32.0px;background:#0b3a63;"></div>
<div class="a" style="left:383.3px;top:842.5px;width:37.4px;height:1.5px;background:#8fc3ee;"></div>
<div class="a" style="left:393px;top:819px;width:18.500px;height:18px;background:#001e36;border:1.300px solid #31a8ff;border-radius:2px"></div>
<div class="t" style="left:396px;top:822px;font-size:10.500px;line-height:12px;color:#31a8ff;font-weight:bold;letter-spacing:-0.300px">Ps</div>
<div class="t " style="left:1237.0px;top:821.0px;color:#fff;font-family:'Liberation Mono',monospace;font-size:9px;letter-spacing:-0.500px;"><span class="l">CH</span></div>
<div class="a" style="left:1254.0px;top:821.6px;width:11.3px;height:10.2px;background:#f4f4f4;"></div>
<div class="t" style="left:1254.600px;top:821.700px;font-size:10px;line-height:10px;height:10px;color:#04203c;font-weight:bold">拼</div>
<svg style="left:1285px;top:821.500px" width="14" height="13" viewBox="0 0 14 13"><circle cx="8" cy="5.500" r="4.800" fill="#3f8fe0"/><path d="M4.500 4Q7 1 11 3Q9 6 11.500 8Q8 10 5 8Z" fill="#58c858"/><path d="M0.500 7L6 5.500L9.500 7.500L6 12.500L4.500 10L1 11Z" fill="#f0c020"/><path d="M2 9.500L7 8.500L6 11Z" fill="#38a838"/></svg>
<div class="a" style="left:1304.8px;top:822.7px;width:12.2px;height:11.3px;background:#1a1a1a;"></div>
<svg style="left:1306px;top:824.500px" width="10" height="8" viewBox="0 0 10 8"><path d="M0.500 4Q3 0.500 7 1.500V0.500H9.500V7.500H7V6.500Q3 7.500 0.500 4Z" fill="#76b900"/><path d="M2.500 4Q4 2.500 6 3V5Q4 5.500 2.500 4Z" fill="#1a1a1a"/></svg>
<svg style="left:1324.500px;top:820.500px" width="11" height="15" viewBox="0 0 11 15"><rect x="2.500" y="0.600" width="4" height="3" fill="none" stroke="#fff" stroke-width="1"/><rect x="1.200" y="3.600" width="6.600" height="9.500" rx="1" fill="none" stroke="#fff" stroke-width="1.100"/><path d="M8 11.500L9.500 13L10.800 10.500" fill="none" stroke="#fff" stroke-width="1"/></svg>
<svg style="left:1343.500px;top:821.500px" width="12" height="12" viewBox="0 0 12 12"><path d="M1 11A10 10 0 0 1 11 1" fill="none" stroke="#c8d0d8" stroke-width="1.100"/><path d="M4 11A7 7 0 0 1 11 4" fill="none" stroke="#c8d0d8" stroke-width="1.100"/><path d="M7 11A4 4 0 0 1 11 7" fill="none" stroke="#c8d0d8" stroke-width="1.100"/><circle cx="10" cy="10.500" r="1.300" fill="#fff"/></svg>
<svg style="left:1360.500px;top:821.500px" width="14" height="12" viewBox="0 0 14 12"><path d="M0.600 4H3L6 1.200V10.800L3 8H0.600Z" fill="none" stroke="#fff" stroke-width="1"/><path d="M8 4Q9.200 6 8 8M9.800 2.500Q12 6 9.800 9.500M11.600 1Q14.800 6 11.600 11" fill="none" stroke="#fff" stroke-width="1"/></svg>
<svg style="left:1379.500px;top:823.300px" width="19" height="10" viewBox="0 0 19 10"><rect x="0.600" y="0.600" width="17.800" height="8.800" rx="1" fill="none" stroke="#fff" stroke-width="1"/><path d="M3 3.200H16M3 5H16" stroke="#fff" stroke-width="1" stroke-dasharray="1.300 1"/><path d="M5 7.200H14" stroke="#fff" stroke-width="1"/></svg>
<div class="t " style="left:1407.4px;top:830.0px;color:#e8eef4;font-size:11.3px;letter-spacing:-0.418px;">2026/2/25</div>
<svg style="left:1469px;top:830px" width="11" height="6"><path d="M0.5 0.5L5.500 5L10.500 0.500" fill="none" stroke="#dfe6ee" stroke-width="1"/></svg>
<div class="a" style="left:1496.5px;top:812.0px;width:0.8px;height:32.0px;background:#4a5a6c;"></div>
<div class="t" style="left:1412.500px;top:812.500px;height:21px;line-height:21px;font-family:'DejaVu Sans Mono','Liberation Mono',monospace;font-weight:bold;font-size:18px;letter-spacing:0px;color:#fff;text-shadow:-2px -1px 0 #000,-2px 0px 0 #000,-2px 1px 0 #000,-1px -2px 0 #000,-1px -1px 0 #000,-1px 0px 0 #000,-1px 1px 0 #000,-1px 2px 0 #000,0px -2px 0 #000,0px -1px 0 #000,0px 1px 0 #000,0px 2px 0 #000,1px -2px 0 #000,1px -1px 0 #000,1px 0px 0 #000,1px 1px 0 #000,1px 2px 0 #000,2px -1px 0 #000,2px 0px 0 #000,2px 1px 0 #000">@Vefans</div>
</body></html>
